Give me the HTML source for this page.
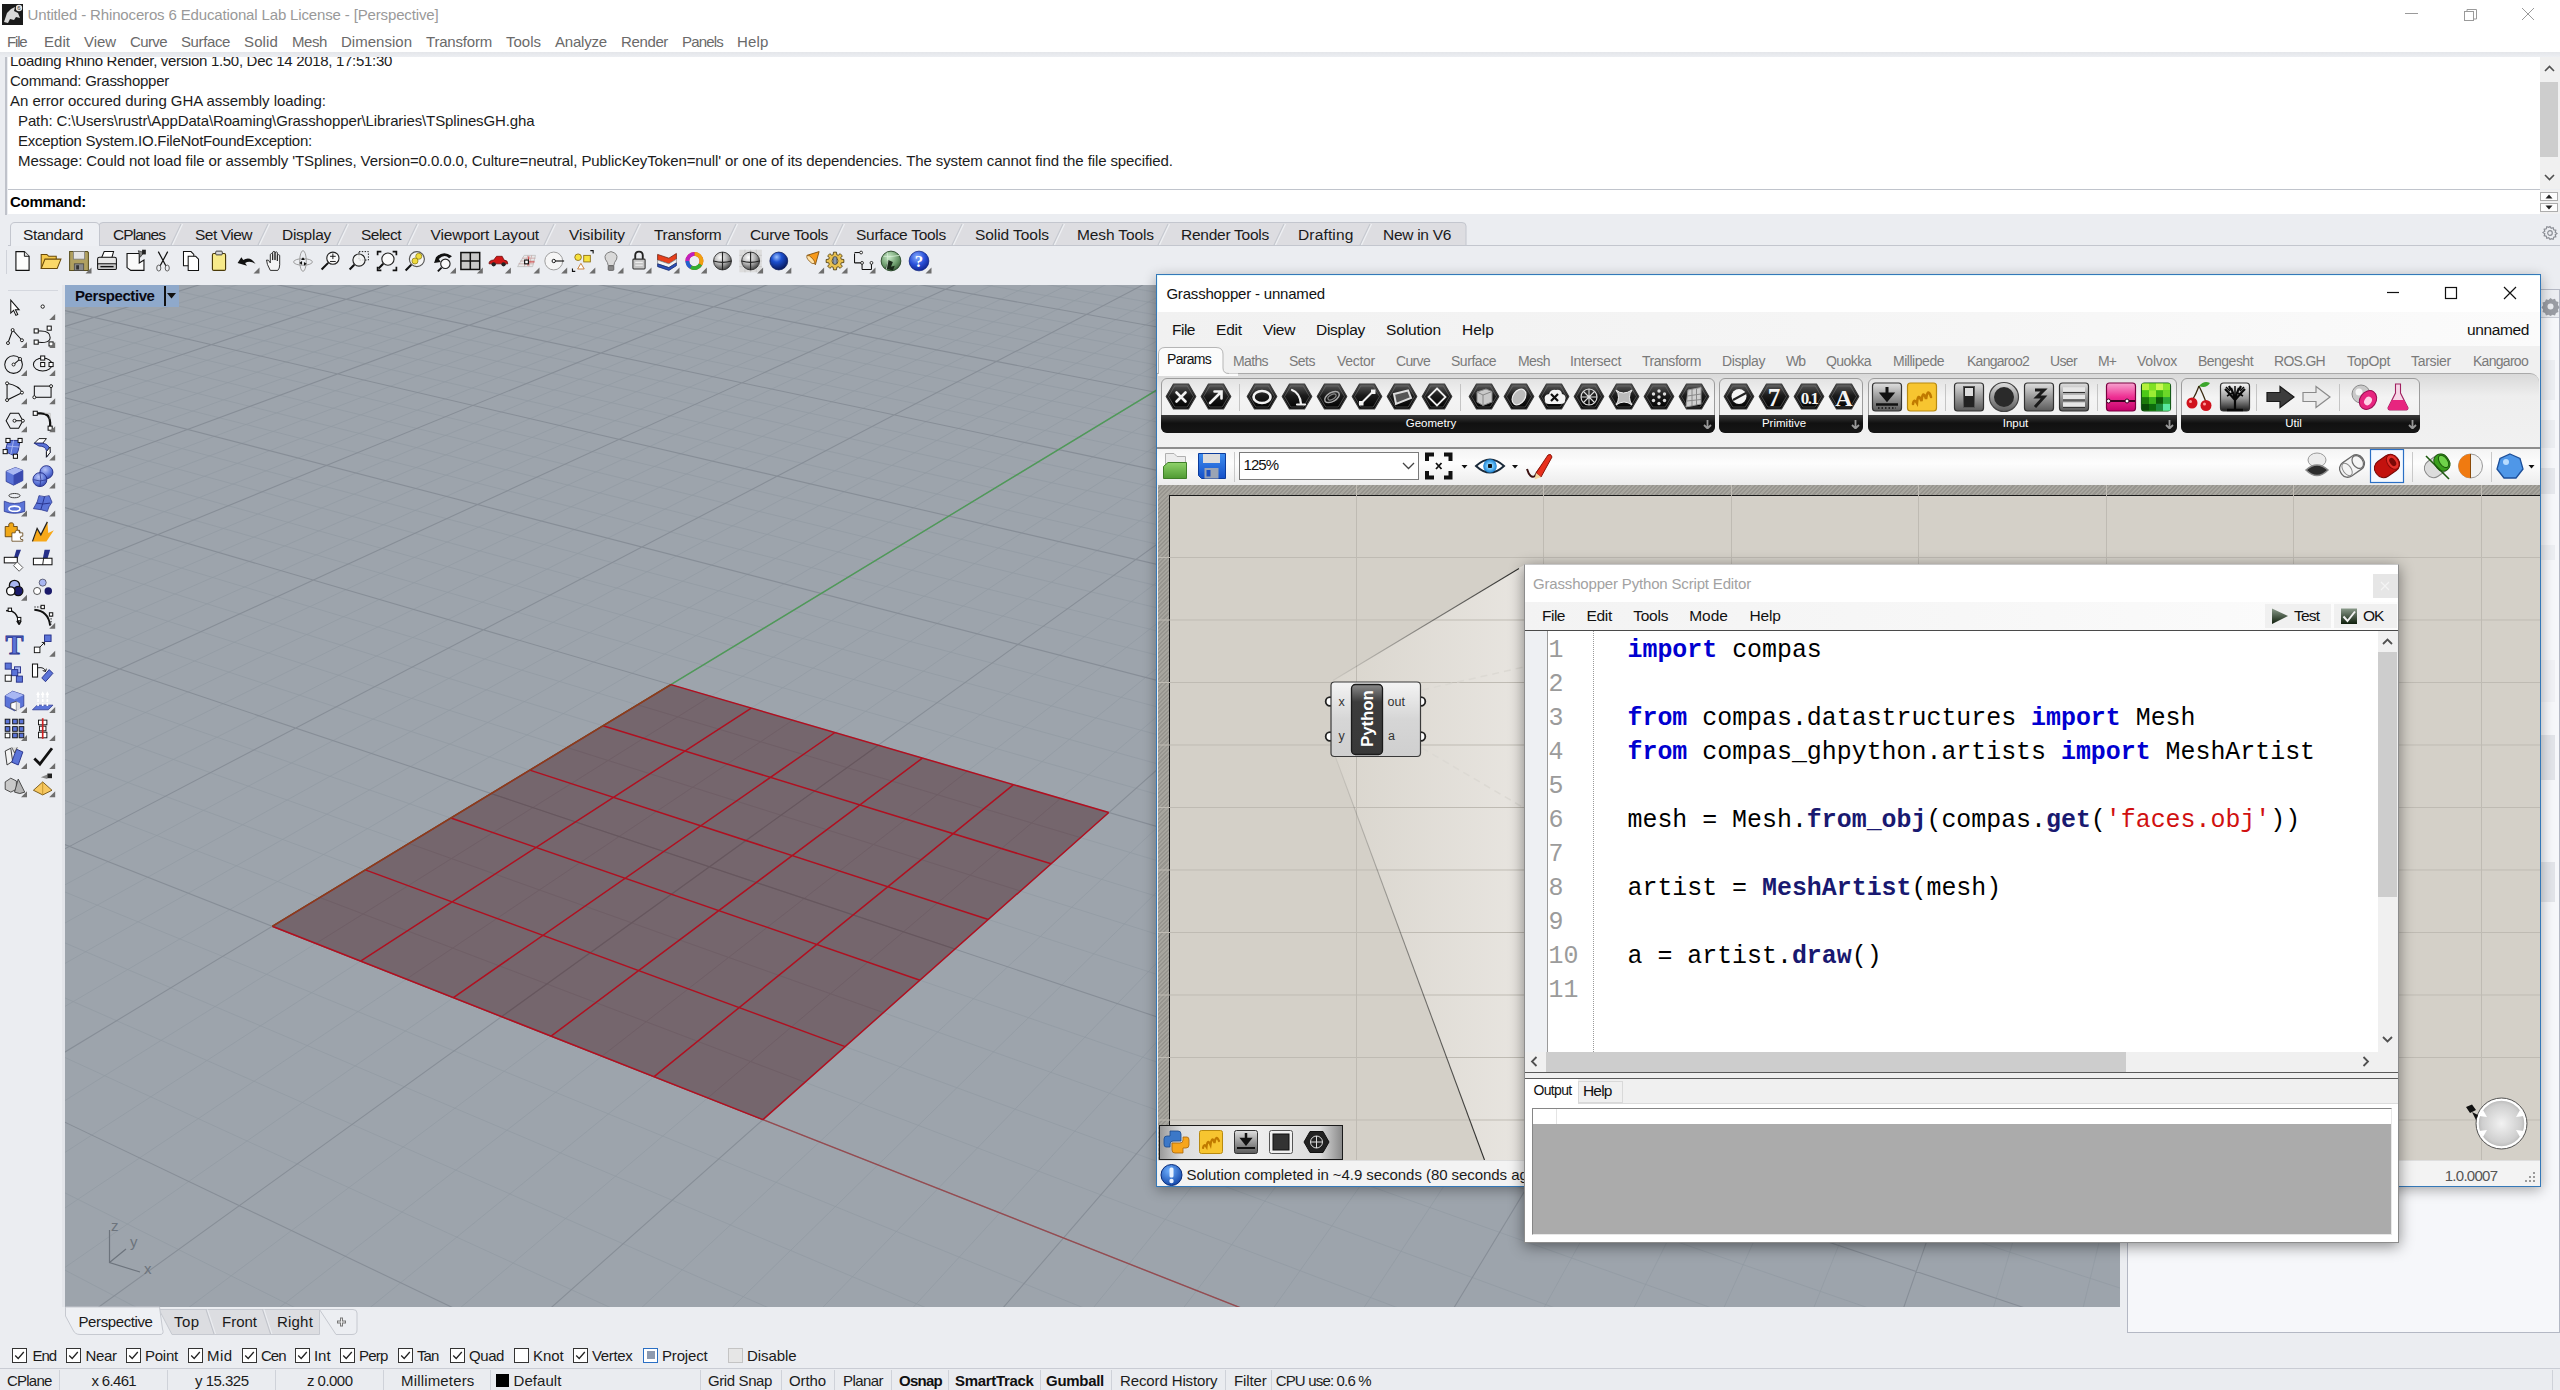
<!DOCTYPE html>
<html><head><meta charset="utf-8"><title>Rhino Grasshopper</title>
<style>
html,body{margin:0;padding:0}
body{width:2560px;height:1390px;overflow:hidden;position:relative;background:#ebedf1;font-family:"Liberation Sans",sans-serif}
.b{position:absolute;display:block}
.t{position:absolute;white-space:pre;font-family:"Liberation Sans",sans-serif}
.m{font-family:"Liberation Mono",monospace}
</style></head><body>
<div class="b" style="left:0.00px;top:0.00px;width:2560.00px;height:52.00px;background:#ffffff;"></div>
<svg class="b" style="left:2px;top:4px" width="21" height="21" viewBox="0 0 21 21"><rect width="21" height="21" fill="#1a1a1a"/><path d="M2 18 L5 9 L9 5 L13 3 L12 7 L16 9 L18 14 L14 13 L12 16 L8 15 L6 19Z" fill="#d8d8d8"/><circle cx="17" cy="4" r="3.2" fill="#e8e8e8"/><text x="15.2" y="6.4" font-size="6" font-family="Liberation Sans, sans-serif" fill="#333">6</text></svg>
<span class="t" style="left:27.50px;top:5.80px;font-size:15.00px;line-height:18.00px;color:#999999;letter-spacing:-0.147px;">Untitled - Rhinoceros 6 Educational Lab License - [Perspective]</span>
<svg class="b" style="left:2390px;top:0" width="170" height="30" viewBox="0 0 170 30" fill="none" stroke="#9a9a9a" stroke-width="1"><path d="M15 13.5H28"/><rect x="74.5" y="11.5" width="9" height="9"/><path d="M77 11.5V9.500H86.500V19H84"/><path d="M132 8L144 20M144 8L132 20"/></svg>
<span class="t" style="left:7.00px;top:32.80px;font-size:15.00px;line-height:18.00px;color:#6a6a6a;letter-spacing:-1.168px;">File</span>
<span class="t" style="left:44.00px;top:32.80px;font-size:15.00px;line-height:18.00px;color:#6a6a6a;letter-spacing:0.038px;">Edit</span>
<span class="t" style="left:84.00px;top:32.80px;font-size:15.00px;line-height:18.00px;color:#6a6a6a;letter-spacing:-0.061px;">View</span>
<span class="t" style="left:130.00px;top:32.80px;font-size:15.00px;line-height:18.00px;color:#6a6a6a;letter-spacing:-0.603px;">Curve</span>
<span class="t" style="left:181.00px;top:32.80px;font-size:15.00px;line-height:18.00px;color:#6a6a6a;letter-spacing:-0.386px;">Surface</span>
<span class="t" style="left:244.00px;top:32.80px;font-size:15.00px;line-height:18.00px;color:#6a6a6a;letter-spacing:0.129px;">Solid</span>
<span class="t" style="left:292.00px;top:32.80px;font-size:15.00px;line-height:18.00px;color:#6a6a6a;letter-spacing:-0.421px;">Mesh</span>
<span class="t" style="left:341.00px;top:32.80px;font-size:15.00px;line-height:18.00px;color:#6a6a6a;letter-spacing:0.015px;">Dimension</span>
<span class="t" style="left:426.00px;top:32.80px;font-size:15.00px;line-height:18.00px;color:#6a6a6a;letter-spacing:-0.200px;">Transform</span>
<span class="t" style="left:506.00px;top:32.80px;font-size:15.00px;line-height:18.00px;color:#6a6a6a;letter-spacing:-0.004px;">Tools</span>
<span class="t" style="left:555.00px;top:32.80px;font-size:15.00px;line-height:18.00px;color:#6a6a6a;letter-spacing:-0.195px;">Analyze</span>
<span class="t" style="left:621.00px;top:32.80px;font-size:15.00px;line-height:18.00px;color:#6a6a6a;letter-spacing:-0.367px;">Render</span>
<span class="t" style="left:682.00px;top:32.80px;font-size:15.00px;line-height:18.00px;color:#6a6a6a;letter-spacing:-0.811px;">Panels</span>
<span class="t" style="left:737.00px;top:32.80px;font-size:15.00px;line-height:18.00px;color:#6a6a6a;letter-spacing:0.162px;">Help</span>
<div class="b" style="left:0.00px;top:52.00px;width:2560.00px;height:5.00px;background:linear-gradient(#e4e6ea,#eceef2);"></div>
<div class="b" style="left:8.00px;top:57.00px;width:2532.00px;height:132.00px;background:#ffffff;"></div>
<div class="b" style="left:5.00px;top:57.00px;width:1.50px;height:158.00px;background:#bfc2ca;"></div>
<div class="b" style="left:8px;top:57px;width:2532px;height:132px;overflow:hidden">
<span class="t" style="left:2.00px;top:-5.20px;font-size:15.00px;line-height:18.00px;color:#1c1c1c;letter-spacing:-0.307px;">Loading Rhino Render, version 1.50, Dec 14 2018, 17:51:30</span>
<span class="t" style="left:2.00px;top:14.80px;font-size:15.00px;line-height:18.00px;color:#1c1c1c;letter-spacing:-0.263px;">Command: Grasshopper</span>
<span class="t" style="left:2.00px;top:34.80px;font-size:15.00px;line-height:18.00px;color:#1c1c1c;letter-spacing:-0.038px;">An error occured during GHA assembly loading:</span>
<span class="t" style="left:10.00px;top:54.80px;font-size:15.00px;line-height:18.00px;color:#1c1c1c;letter-spacing:-0.120px;">Path: C:\Users\rustr\AppData\Roaming\Grasshopper\Libraries\TSplinesGH.gha</span>
<span class="t" style="left:10.00px;top:74.80px;font-size:15.00px;line-height:18.00px;color:#1c1c1c;letter-spacing:-0.246px;">Exception System.IO.FileNotFoundException:</span>
<span class="t" style="left:10.00px;top:94.80px;font-size:15.00px;line-height:18.00px;color:#1c1c1c;letter-spacing:-0.104px;">Message: Could not load file or assembly 'TSplines, Version=0.0.0.0, Culture=neutral, PublicKeyToken=null' or one of its dependencies. The system cannot find the file specified.</span>
</div>
<div class="b" style="left:2540.00px;top:57.00px;width:20.00px;height:132.00px;background:#f0f0f0;"></div>
<div class="b" style="left:2540.00px;top:82.00px;width:18.00px;height:75.00px;background:#cdcdcd;"></div>
<svg class="b" style="left:2540px;top:57px" width="20" height="132" fill="none" stroke="#505050" stroke-width="1.6"><path d="M5 14L9.500 9.500L14 14"/><path d="M5 118L9.500 122.500L14 118"/></svg>
<div class="b" style="left:8.00px;top:189.00px;width:2532.00px;height:1.00px;background:#c0c4cc;"></div>
<div class="b" style="left:8.00px;top:190.00px;width:2532.00px;height:24.00px;background:#ffffff;"></div>
<span class="t" style="left:10.00px;top:193.10px;font-size:15.00px;line-height:18.00px;color:#000;font-weight:bold;letter-spacing:-0.292px;">Command:</span>
<div class="b" style="left:2540.00px;top:190.00px;width:20.00px;height:24.00px;background:#f0f0f0;"></div>
<svg class="b" style="left:2540px;top:190px" width="20" height="24"><rect x="0.500" y="2.500" width="17" height="8" fill="#fdfdfd" stroke="#adadad"/><rect x="0.500" y="13.500" width="17" height="8" fill="#fdfdfd" stroke="#adadad"/><path d="M5.500 8.500L9 4.500L12.500 8.500Z M5.500 15.500L9 19.500L12.500 15.500Z" fill="#222"/></svg>
<div class="b" style="left:8.00px;top:245.00px;width:2552.00px;height:1.00px;background:#c3c6ce;"></div>
<svg class="b" style="left:0;top:220px" width="1480" height="27" viewBox="0 220 1480 27"><path d="M99 245.500 L99 226 Q99 222.500 103 222.500 L1462 222.500 Q1466 222.500 1466 226 L1466 245.500Z" fill="#dddde1" stroke="#c3c6ce"/><path d="M171.0 245 L181.0 224" stroke="#c6c9d0" stroke-width="1.2" fill="none"/><path d="M172.5 245 L182.5 224" stroke="#eef0f3" stroke-width="1.2" fill="none"/><path d="M258.0 245 L268.0 224" stroke="#c6c9d0" stroke-width="1.2" fill="none"/><path d="M259.5 245 L269.5 224" stroke="#eef0f3" stroke-width="1.2" fill="none"/><path d="M337.0 245 L347.0 224" stroke="#c6c9d0" stroke-width="1.2" fill="none"/><path d="M338.5 245 L348.5 224" stroke="#eef0f3" stroke-width="1.2" fill="none"/><path d="M407.0 245 L417.0 224" stroke="#c6c9d0" stroke-width="1.2" fill="none"/><path d="M408.5 245 L418.5 224" stroke="#eef0f3" stroke-width="1.2" fill="none"/><path d="M544.0 245 L554.0 224" stroke="#c6c9d0" stroke-width="1.2" fill="none"/><path d="M545.5 245 L555.5 224" stroke="#eef0f3" stroke-width="1.2" fill="none"/><path d="M629.0 245 L639.0 224" stroke="#c6c9d0" stroke-width="1.2" fill="none"/><path d="M630.5 245 L640.5 224" stroke="#eef0f3" stroke-width="1.2" fill="none"/><path d="M726.0 245 L736.0 224" stroke="#c6c9d0" stroke-width="1.2" fill="none"/><path d="M727.5 245 L737.5 224" stroke="#eef0f3" stroke-width="1.2" fill="none"/><path d="M833.0 245 L843.0 224" stroke="#c6c9d0" stroke-width="1.2" fill="none"/><path d="M834.5 245 L844.5 224" stroke="#eef0f3" stroke-width="1.2" fill="none"/><path d="M952.0 245 L962.0 224" stroke="#c6c9d0" stroke-width="1.2" fill="none"/><path d="M953.5 245 L963.5 224" stroke="#eef0f3" stroke-width="1.2" fill="none"/><path d="M1053.0 245 L1063.0 224" stroke="#c6c9d0" stroke-width="1.2" fill="none"/><path d="M1054.5 245 L1064.5 224" stroke="#eef0f3" stroke-width="1.2" fill="none"/><path d="M1158.0 245 L1168.0 224" stroke="#c6c9d0" stroke-width="1.2" fill="none"/><path d="M1159.5 245 L1169.5 224" stroke="#eef0f3" stroke-width="1.2" fill="none"/><path d="M1274.0 245 L1284.0 224" stroke="#c6c9d0" stroke-width="1.2" fill="none"/><path d="M1275.5 245 L1285.5 224" stroke="#eef0f3" stroke-width="1.2" fill="none"/><path d="M1360.0 245 L1370.0 224" stroke="#c6c9d0" stroke-width="1.2" fill="none"/><path d="M1361.5 245 L1371.5 224" stroke="#eef0f3" stroke-width="1.2" fill="none"/><path d="M10.500 246 L10.500 227 Q10.500 222.500 15 222.500 L95 222.500 Q99.500 222.500 99.500 227 L99.500 246" fill="#edeff3" stroke="#c3c6ce"/></svg>
<span class="t" style="left:23.00px;top:226.13px;font-size:15.50px;line-height:18.60px;color:#1a1a1a;letter-spacing:-0.364px;">Standard</span>
<span class="t" style="left:113.00px;top:226.13px;font-size:15.50px;line-height:18.60px;color:#1a1a1a;letter-spacing:-0.942px;">CPlanes</span>
<span class="t" style="left:195.00px;top:226.13px;font-size:15.50px;line-height:18.60px;color:#1a1a1a;letter-spacing:-0.486px;">Set View</span>
<span class="t" style="left:282.00px;top:226.13px;font-size:15.50px;line-height:18.60px;color:#1a1a1a;letter-spacing:-0.261px;">Display</span>
<span class="t" style="left:361.00px;top:226.13px;font-size:15.50px;line-height:18.60px;color:#1a1a1a;letter-spacing:-0.514px;">Select</span>
<span class="t" style="left:430.50px;top:226.13px;font-size:15.50px;line-height:18.60px;color:#1a1a1a;letter-spacing:-0.158px;">Viewport Layout</span>
<span class="t" style="left:569.00px;top:226.13px;font-size:15.50px;line-height:18.60px;color:#1a1a1a;letter-spacing:0.029px;">Visibility</span>
<span class="t" style="left:654.00px;top:226.13px;font-size:15.50px;line-height:18.60px;color:#1a1a1a;letter-spacing:-0.283px;">Transform</span>
<span class="t" style="left:750.00px;top:226.13px;font-size:15.50px;line-height:18.60px;color:#1a1a1a;letter-spacing:-0.324px;">Curve Tools</span>
<span class="t" style="left:856.00px;top:226.13px;font-size:15.50px;line-height:18.60px;color:#1a1a1a;letter-spacing:-0.279px;">Surface Tools</span>
<span class="t" style="left:975.00px;top:226.13px;font-size:15.50px;line-height:18.60px;color:#1a1a1a;letter-spacing:-0.062px;">Solid Tools</span>
<span class="t" style="left:1077.00px;top:226.13px;font-size:15.50px;line-height:18.60px;color:#1a1a1a;letter-spacing:-0.111px;">Mesh Tools</span>
<span class="t" style="left:1181.00px;top:226.13px;font-size:15.50px;line-height:18.60px;color:#1a1a1a;letter-spacing:-0.254px;">Render Tools</span>
<span class="t" style="left:1298.00px;top:226.13px;font-size:15.50px;line-height:18.60px;color:#1a1a1a;letter-spacing:0.153px;">Drafting</span>
<span class="t" style="left:1383.00px;top:226.13px;font-size:15.50px;line-height:18.60px;color:#1a1a1a;letter-spacing:-0.294px;">New in V6</span>
<svg class="b" style="left:2542px;top:225px" width="16" height="16" viewBox="0 0 16 16" fill="none" stroke="#8a8d94" stroke-width="1.200"><circle cx="8" cy="8" r="2.300"/><path d="M8 1.500l1.200 1.800 2-.6.500 2.100 2.100.5-.6 2 1.800 1.200-1.800 1.200.6 2-2.100.5-.5 2.100-2-.6L8 14.500l-1.200-1.800-2 .6-.5-2.100-2.100-.5.6-2L1 7.500l1.800-1.200-.6-2 2.100-.5.5-2.100 2 .6z"/></svg>
<svg class="b" style="left:65px;top:285px" width="2055" height="1022" viewBox="65 285 2055 1022">
<rect x="65" y="285" width="2055" height="1022" fill="#9da4ac"/>
<path d="M63.0 291.4L91.4 283.0M63.0 302.9L129.4 283.0M63.0 314.7L167.3 283.0M63.0 339.6L243.1 283.0M63.0 352.7L281.0 283.0M63.0 366.2L318.8 283.0M63.0 380.2L356.7 283.0M63.0 409.7L432.3 283.0M63.0 425.2L470.0 283.0M63.0 441.3L507.8 283.0M63.0 458.1L545.5 283.0M63.0 493.5L620.9 283.0M63.0 512.3L658.6 283.0M63.0 531.9L696.2 283.0M63.0 552.3L733.9 283.0M63.0 595.7L809.1 283.0M63.0 618.9L846.6 283.0M63.0 643.1L884.2 283.0M63.0 668.5L921.7 283.0M63.0 723.0L996.7 283.0M63.0 752.3L1034.2 283.0M63.0 783.1L1071.6 283.0M63.0 1269.1L139.4 1309.0M63.0 815.6L1109.0 283.0M63.0 1191.9L297.6 1309.0M63.0 885.9L1183.8 283.0M63.0 1056.6L613.5 1309.0M63.0 924.1L1221.2 283.0M63.0 997.1L771.2 1309.0M63.0 964.6L1258.6 283.0M63.0 942.1L928.8 1309.0M63.0 1007.6L1295.9 283.0M63.0 891.2L1086.3 1309.0M63.0 1101.8L1370.5 283.0M63.0 799.8L1400.8 1309.0M63.0 1153.7L1407.8 283.0M63.0 758.6L1557.8 1309.0M63.0 1209.3L1445.0 283.0M63.0 720.1L1714.6 1309.0M63.0 1268.8L1482.2 283.0M63.0 684.0L1871.4 1309.0M186.8 1309.0L1556.6 283.0M63.0 618.1L2122.0 1288.7M277.6 1309.0L1593.8 283.0M63.0 588.0L2122.0 1239.8M368.3 1309.0L1631.0 283.0M63.0 559.5L2122.0 1193.6M458.9 1309.0L1668.1 283.0M63.0 532.6L2122.0 1149.9M640.1 1309.0L1742.3 283.0M63.0 482.8L2122.0 1069.1M730.7 1309.0L1779.4 283.0M63.0 459.8L2122.0 1031.8M821.2 1309.0L1816.4 283.0M63.0 437.9L2122.0 996.2M911.6 1309.0L1853.4 283.0M63.0 417.1L2122.0 962.4M1092.3 1309.0L1927.5 283.0M63.0 378.2L2122.0 899.3M1182.6 1309.0L1964.4 283.0M63.0 360.1L2122.0 869.8M1272.8 1309.0L2001.4 283.0M63.0 342.7L2122.0 841.7M1363.0 1309.0L2038.3 283.0M63.0 326.1L2122.0 814.7M1543.3 1309.0L2112.1 283.0M63.0 294.9L2122.0 764.0M1633.3 1309.0L2122.0 336.7M75.6 283.0L2122.0 740.2M1723.3 1309.0L2122.0 424.6M140.2 283.0L2122.0 717.3M1813.3 1309.0L2122.0 535.3M204.7 283.0L2122.0 695.3M1993.0 1309.0L2122.0 872.7M333.6 283.0L2122.0 653.7M2082.8 1309.0L2122.0 1148.4M397.9 283.0L2122.0 634.1M462.2 283.0L2122.0 615.1M526.4 283.0L2122.0 596.8M654.7 283.0L2122.0 562.1M718.8 283.0L2122.0 545.6M782.8 283.0L2122.0 529.6M846.7 283.0L2122.0 514.2M974.4 283.0L2122.0 484.7M1038.2 283.0L2122.0 470.7M1101.9 283.0L2122.0 457.0M1165.6 283.0L2122.0 443.8M1292.7 283.0L2122.0 418.5M1356.2 283.0L2122.0 406.4M1419.6 283.0L2122.0 394.7M1483.0 283.0L2122.0 383.2M1609.5 283.0L2122.0 361.3M1672.7 283.0L2122.0 350.8M1735.9 283.0L2122.0 340.5M1798.9 283.0L2122.0 330.5M1924.9 283.0L2122.0 311.3M1987.8 283.0L2122.0 302.0M2050.7 283.0L2122.0 293.0M2113.5 283.0L2122.0 284.2" stroke="#929aa2" stroke-width="1" fill="none" opacity="0.7"/>
<path d="M63.0 327.0L205.2 283.0M63.0 394.7L394.5 283.0M63.0 475.5L583.2 283.0M63.0 573.5L771.5 283.0M63.0 695.1L959.2 283.0M63.0 849.8L1146.5 283.0M63.0 1121.3L455.6 1309.0M63.0 1053.2L1333.2 283.0M63.0 843.8L1243.6 1309.0M96.0 1309.0L1519.4 283.0M63.0 650.0L2028.0 1309.0M549.6 1309.0L1705.2 283.0M63.0 507.0L2122.0 1108.4M1002.0 1309.0L1890.5 283.0M63.0 397.2L2122.0 930.1M1453.2 1309.0L2075.2 283.0M63.0 310.1L2122.0 788.8M1903.2 1309.0L2122.0 678.9M269.2 283.0L2122.0 674.1M590.6 283.0L2122.0 579.1M910.6 283.0L2122.0 499.2M1229.2 283.0L2122.0 431.0M1546.3 283.0L2122.0 372.1M1862.0 283.0L2122.0 320.8" stroke="#878e97" stroke-width="1.1" fill="none"/>
<path d="M272.3 926.3L1243.6 1309.0" stroke="#964b50" stroke-width="1.4"/>
<path d="M272.3 926.3L1333.2 283.0" stroke="#4f9a58" stroke-width="1.4"/>
<polygon points="272.3,926.3 762.9,1119.6 1108.8,812.5 670.9,684.6" fill="#74636a" fill-opacity="0.96"/>
<path d="M315.9 943.5L710.7 696.2M319.8 897.5L805.0 1082.2M406.4 979.1L792.7 720.2M408.9 843.4L883.4 1012.6M501.6 1016.6L878.2 745.2M491.1 793.6L954.9 949.1M601.9 1056.2L967.5 771.2M567.1 747.5L1020.4 891.0M707.8 1097.9L1060.6 798.4M637.6 704.8L1080.5 837.6" stroke="#6f5f66" stroke-width="1" fill="none"/>
<path d="M501.6 1016.6L878.2 745.2M491.1 793.6L954.9 949.1" stroke="#66575e" stroke-width="1.1" fill="none"/>
<path d="M272.3 926.3L670.9 684.6M272.3 926.3L762.9 1119.6M360.6 961.1L751.3 708.1M365.3 869.9L845.1 1046.6M453.4 997.6L835.0 732.5M450.9 818.0L920.0 980.2M551.1 1036.1L922.4 758.1M529.8 770.1L988.3 919.5M654.1 1076.7L1013.5 784.7M603.0 725.8L1051.1 863.8M762.9 1119.6L1108.8 812.5M670.9 684.6L1108.8 812.5" stroke="#b01020" stroke-width="1.5" fill="none"/>
<path d="M272.3 926.3L670.9 684.6" stroke="#84441c" stroke-width="1.25" fill="none"/>
<g stroke="#6d747d" stroke-width="1.2" fill="none"><path d="M109.500 1230V1262.500L140 1272M109.500 1262.500L126 1249"/></g>
<g font-family="Liberation Sans, sans-serif" font-size="15" fill="#6d747d"><text x="111" y="1231">z</text><text x="130" y="1247">y</text><text x="144" y="1274">x</text></g>
</svg>
<div class="b" style="left:65.00px;top:285.00px;width:114.00px;height:22.00px;background:#8fa9cb;"></div>
<span class="t" style="left:75.00px;top:286.80px;font-size:15.00px;line-height:18.00px;color:#0a0a14;font-weight:bold;letter-spacing:-0.430px;">Perspective</span>
<div class="b" style="left:164.00px;top:286.00px;width:1.50px;height:20.00px;background:#111;"></div>
<svg class="b" style="left:166px;top:292px" width="12" height="8"><path d="M1 1H10L5.500 6.500Z" fill="#111"/></svg>
<svg class="b" style="left:60px;top:1306px" width="320" height="32" viewBox="60 1306 320 32"><path d="M159 1309.500H319.500V1334.500H172Z" fill="#dcdde1" stroke="#c6c9d0"/><path d="M319.500 1309.500H353Q357 1309.500 357 1313V1330Q357 1334.500 352 1334.500H336Z" fill="#eceef2" stroke="#c6c9d0"/><path d="M206 1309.500L214 1334M262.500 1309.500L270.500 1334" stroke="#c0c3ca" fill="none"/><path d="M207.500 1309.500L215.500 1334M264 1309.500L272 1334" stroke="#eceef2" fill="none"/><path d="M65.500 1307V1316L73 1330Q75 1334.500 80 1334.500H160Q164.500 1334.500 162.500 1329L159.500 1307Z" fill="#eef0f4" stroke="#c6c9d0"/><path d="M337 1322H346M341.500 1317.500V1326.500" stroke="#777" stroke-width="3" fill="none"/><path d="M338 1322H345M341.500 1318.500V1325.500" stroke="#eee" stroke-width="1" fill="none"/></svg>
<span class="t" style="left:78.50px;top:1313.30px;font-size:15.00px;line-height:18.00px;color:#1a1a1a;letter-spacing:-0.398px;">Perspective</span>
<span class="t" style="left:174.00px;top:1313.30px;font-size:15.00px;line-height:18.00px;color:#1a1a1a;letter-spacing:0.438px;">Top</span>
<span class="t" style="left:222.00px;top:1313.30px;font-size:15.00px;line-height:18.00px;color:#1a1a1a;letter-spacing:-0.003px;">Front</span>
<span class="t" style="left:277.00px;top:1313.30px;font-size:15.00px;line-height:18.00px;color:#1a1a1a;letter-spacing:0.196px;">Right</span>
<div class="b" style="left:12.00px;top:1347.50px;width:15.00px;height:15.00px;background:#fff;border:1px solid #333;box-sizing:border-box;"></div>
<svg class="b" style="left:12.0px;top:1348px" width="15" height="15"><path d="M3.200 7.500L6.200 10.500L11.800 4" stroke="#222" stroke-width="1.300" fill="none"/></svg>
<span class="t" style="left:32.50px;top:1346.80px;font-size:15.00px;line-height:18.00px;color:#1a1a1a;letter-spacing:-1.064px;">End</span>
<div class="b" style="left:66.00px;top:1347.50px;width:15.00px;height:15.00px;background:#fff;border:1px solid #333;box-sizing:border-box;"></div>
<svg class="b" style="left:66.0px;top:1348px" width="15" height="15"><path d="M3.200 7.500L6.200 10.500L11.800 4" stroke="#222" stroke-width="1.300" fill="none"/></svg>
<span class="t" style="left:85.50px;top:1346.80px;font-size:15.00px;line-height:18.00px;color:#1a1a1a;letter-spacing:-0.379px;">Near</span>
<div class="b" style="left:125.50px;top:1347.50px;width:15.00px;height:15.00px;background:#fff;border:1px solid #333;box-sizing:border-box;"></div>
<svg class="b" style="left:125.5px;top:1348px" width="15" height="15"><path d="M3.200 7.500L6.200 10.500L11.800 4" stroke="#222" stroke-width="1.300" fill="none"/></svg>
<span class="t" style="left:145.00px;top:1346.80px;font-size:15.00px;line-height:18.00px;color:#1a1a1a;letter-spacing:-0.238px;">Point</span>
<div class="b" style="left:187.50px;top:1347.50px;width:15.00px;height:15.00px;background:#fff;border:1px solid #333;box-sizing:border-box;"></div>
<svg class="b" style="left:187.5px;top:1348px" width="15" height="15"><path d="M3.200 7.500L6.200 10.500L11.800 4" stroke="#222" stroke-width="1.300" fill="none"/></svg>
<span class="t" style="left:207.00px;top:1346.80px;font-size:15.00px;line-height:18.00px;color:#1a1a1a;letter-spacing:0.443px;">Mid</span>
<div class="b" style="left:241.50px;top:1347.50px;width:15.00px;height:15.00px;background:#fff;border:1px solid #333;box-sizing:border-box;"></div>
<svg class="b" style="left:241.5px;top:1348px" width="15" height="15"><path d="M3.200 7.500L6.200 10.500L11.800 4" stroke="#222" stroke-width="1.300" fill="none"/></svg>
<span class="t" style="left:261.00px;top:1346.80px;font-size:15.00px;line-height:18.00px;color:#1a1a1a;letter-spacing:-1.007px;">Cen</span>
<div class="b" style="left:294.50px;top:1347.50px;width:15.00px;height:15.00px;background:#fff;border:1px solid #333;box-sizing:border-box;"></div>
<svg class="b" style="left:294.5px;top:1348px" width="15" height="15"><path d="M3.200 7.500L6.200 10.500L11.800 4" stroke="#222" stroke-width="1.300" fill="none"/></svg>
<span class="t" style="left:314.00px;top:1346.80px;font-size:15.00px;line-height:18.00px;color:#1a1a1a;letter-spacing:-0.060px;">Int</span>
<div class="b" style="left:339.50px;top:1347.50px;width:15.00px;height:15.00px;background:#fff;border:1px solid #333;box-sizing:border-box;"></div>
<svg class="b" style="left:339.5px;top:1348px" width="15" height="15"><path d="M3.200 7.500L6.200 10.500L11.800 4" stroke="#222" stroke-width="1.300" fill="none"/></svg>
<span class="t" style="left:359.00px;top:1346.80px;font-size:15.00px;line-height:18.00px;color:#1a1a1a;letter-spacing:-0.797px;">Perp</span>
<div class="b" style="left:397.50px;top:1347.50px;width:15.00px;height:15.00px;background:#fff;border:1px solid #333;box-sizing:border-box;"></div>
<svg class="b" style="left:397.5px;top:1348px" width="15" height="15"><path d="M3.200 7.500L6.200 10.500L11.800 4" stroke="#222" stroke-width="1.300" fill="none"/></svg>
<span class="t" style="left:417.00px;top:1346.80px;font-size:15.00px;line-height:18.00px;color:#1a1a1a;letter-spacing:-0.896px;">Tan</span>
<div class="b" style="left:449.50px;top:1347.50px;width:15.00px;height:15.00px;background:#fff;border:1px solid #333;box-sizing:border-box;"></div>
<svg class="b" style="left:449.5px;top:1348px" width="15" height="15"><path d="M3.200 7.500L6.200 10.500L11.800 4" stroke="#222" stroke-width="1.300" fill="none"/></svg>
<span class="t" style="left:469.00px;top:1346.80px;font-size:15.00px;line-height:18.00px;color:#1a1a1a;letter-spacing:-0.425px;">Quad</span>
<div class="b" style="left:513.50px;top:1347.50px;width:15.00px;height:15.00px;background:#fff;border:1px solid #333;box-sizing:border-box;"></div>
<span class="t" style="left:533.00px;top:1346.80px;font-size:15.00px;line-height:18.00px;color:#1a1a1a;letter-spacing:-0.090px;">Knot</span>
<div class="b" style="left:572.50px;top:1347.50px;width:15.00px;height:15.00px;background:#fff;border:1px solid #333;box-sizing:border-box;"></div>
<svg class="b" style="left:572.5px;top:1348px" width="15" height="15"><path d="M3.200 7.500L6.200 10.500L11.800 4" stroke="#222" stroke-width="1.300" fill="none"/></svg>
<span class="t" style="left:592.00px;top:1346.80px;font-size:15.00px;line-height:18.00px;color:#1a1a1a;letter-spacing:-0.338px;">Vertex</span>
<div class="b" style="left:643.00px;top:1347.50px;width:15.00px;height:15.00px;background:#fff;border:1px solid #2a6fc4;box-sizing:border-box;"></div>
<div class="b" style="left:646.50px;top:1351.00px;width:8.00px;height:8.00px;background:#8e9aae;"></div>
<span class="t" style="left:662.00px;top:1346.80px;font-size:15.00px;line-height:18.00px;color:#1a1a1a;letter-spacing:-0.170px;">Project</span>
<div class="b" style="left:728.00px;top:1347.50px;width:15.00px;height:15.00px;background:#e6e6e6;border:1px solid #c4c4c4;box-sizing:border-box;"></div>
<span class="t" style="left:747.00px;top:1346.80px;font-size:15.00px;line-height:18.00px;color:#1a1a1a;letter-spacing:-0.075px;">Disable</span>
<div class="b" style="left:0.00px;top:1368.00px;width:2560.00px;height:1.00px;background:#c9ccd4;"></div>
<div class="b" style="left:0.00px;top:1369.00px;width:2560.00px;height:21.00px;background:#eaecf0;"></div>
<div class="b" style="left:59.00px;top:1370.00px;width:1.00px;height:20.00px;background:#cfd2d9;"></div>
<div class="b" style="left:167.00px;top:1370.00px;width:1.00px;height:20.00px;background:#cfd2d9;"></div>
<div class="b" style="left:275.00px;top:1370.00px;width:1.00px;height:20.00px;background:#cfd2d9;"></div>
<div class="b" style="left:383.00px;top:1370.00px;width:1.00px;height:20.00px;background:#cfd2d9;"></div>
<div class="b" style="left:490.00px;top:1370.00px;width:1.00px;height:20.00px;background:#cfd2d9;"></div>
<div class="b" style="left:700.00px;top:1370.00px;width:1.00px;height:20.00px;background:#cfd2d9;"></div>
<div class="b" style="left:781.00px;top:1370.00px;width:1.00px;height:20.00px;background:#cfd2d9;"></div>
<div class="b" style="left:834.00px;top:1370.00px;width:1.00px;height:20.00px;background:#cfd2d9;"></div>
<div class="b" style="left:891.00px;top:1370.00px;width:1.00px;height:20.00px;background:#cfd2d9;"></div>
<div class="b" style="left:948.00px;top:1370.00px;width:1.00px;height:20.00px;background:#cfd2d9;"></div>
<div class="b" style="left:1040.00px;top:1370.00px;width:1.00px;height:20.00px;background:#cfd2d9;"></div>
<div class="b" style="left:1111.00px;top:1370.00px;width:1.00px;height:20.00px;background:#cfd2d9;"></div>
<div class="b" style="left:1225.00px;top:1370.00px;width:1.00px;height:20.00px;background:#cfd2d9;"></div>
<div class="b" style="left:1271.00px;top:1370.00px;width:1.00px;height:20.00px;background:#cfd2d9;"></div>
<div class="b" style="left:2552.00px;top:1370.00px;width:1.00px;height:20.00px;background:#cfd2d9;"></div>
<span class="t" style="left:7.00px;top:1372.10px;font-size:15.00px;line-height:18.00px;color:#1c1c1c;letter-spacing:-0.783px;">CPlane</span>
<span class="t" style="left:91.50px;top:1372.10px;font-size:15.00px;line-height:18.00px;color:#1c1c1c;letter-spacing:-0.673px;">x 6.461</span>
<span class="t" style="left:195.00px;top:1372.10px;font-size:15.00px;line-height:18.00px;color:#1c1c1c;letter-spacing:-0.507px;">y 15.325</span>
<span class="t" style="left:307.00px;top:1372.10px;font-size:15.00px;line-height:18.00px;color:#1c1c1c;letter-spacing:-0.530px;">z 0.000</span>
<span class="t" style="left:401.00px;top:1372.10px;font-size:15.00px;line-height:18.00px;color:#1c1c1c;letter-spacing:0.166px;">Millimeters</span>
<span class="t" style="left:513.50px;top:1372.10px;font-size:15.00px;line-height:18.00px;color:#1c1c1c;letter-spacing:0.067px;">Default</span>
<span class="t" style="left:708.00px;top:1372.10px;font-size:15.00px;line-height:18.00px;color:#1c1c1c;letter-spacing:-0.394px;">Grid Snap</span>
<span class="t" style="left:789.00px;top:1372.10px;font-size:15.00px;line-height:18.00px;color:#1c1c1c;letter-spacing:-0.104px;">Ortho</span>
<span class="t" style="left:843.00px;top:1372.10px;font-size:15.00px;line-height:18.00px;color:#1c1c1c;letter-spacing:-0.561px;">Planar</span>
<span class="t" style="left:899.00px;top:1372.10px;font-size:15.00px;line-height:18.00px;color:#111;font-weight:bold;letter-spacing:-0.737px;">Osnap</span>
<span class="t" style="left:955.00px;top:1372.10px;font-size:15.00px;line-height:18.00px;color:#111;font-weight:bold;letter-spacing:-0.322px;">SmartTrack</span>
<span class="t" style="left:1046.00px;top:1372.10px;font-size:15.00px;line-height:18.00px;color:#111;font-weight:bold;letter-spacing:-0.287px;">Gumball</span>
<span class="t" style="left:1120.00px;top:1372.10px;font-size:15.00px;line-height:18.00px;color:#1c1c1c;letter-spacing:-0.121px;">Record History</span>
<span class="t" style="left:1234.00px;top:1372.10px;font-size:15.00px;line-height:18.00px;color:#1c1c1c;letter-spacing:-0.139px;">Filter</span>
<span class="t" style="left:1275.70px;top:1372.10px;font-size:15.00px;line-height:18.00px;color:#1c1c1c;letter-spacing:-0.830px;">CPU use: 0.6 %</span>
<div class="b" style="left:496.00px;top:1374.00px;width:13.00px;height:13.00px;background:#000;"></div>
<div class="b" style="left:2127.00px;top:289.00px;width:433.00px;height:1044.00px;background:#f6f7fa;border:1px solid #b4b8c4;box-sizing:border-box;"></div>
<div class="b" style="left:2128.00px;top:290.00px;width:431.00px;height:27.00px;background:#ebedf1;border-bottom:1px solid #c9ccd4;"></div>
<svg class="b" style="left:2541px;top:297px" width="19" height="19" viewBox="-9.500 -9.500 19 19"><path d="M0 -8.500l2 1.600 2.500-.800 1 2.400 2.500.900-.600 2.600L9 1l-1.600 2 .500 2.600-2.400 1-1 2.400-2.500-.700L0 9.500l-2-1.200-2.500.700-1-2.400-2.400-1 .500-2.600L-9 1l1.600-2.300-.600-2.600 2.500-.900 1-2.400 2.500.800z" fill="#9a9da4"/><circle r="3" fill="#ebedf1"/></svg>
<div class="b" style="left:2541.00px;top:360.00px;width:14.00px;height:40.00px;background:#eceef2;"></div>
<div class="b" style="left:2541.00px;top:420.00px;width:14.00px;height:28.00px;background:#eceef2;"></div>
<div class="b" style="left:2541.00px;top:468.00px;width:14.00px;height:26.00px;background:#e6e8ed;"></div>
<div class="b" style="left:2541.00px;top:545.00px;width:14.00px;height:15.00px;background:#eceef2;"></div>
<div class="b" style="left:2541.00px;top:660.00px;width:14.00px;height:42.00px;background:#f0f1f5;"></div>
<div class="b" style="left:2541.00px;top:735.00px;width:14.00px;height:45.00px;background:#e2e4e9;"></div>
<div class="b" style="left:2541.00px;top:862.00px;width:14.00px;height:40.00px;background:#e2e4e9;"></div>
<svg class="b" style="left:0;top:246px" width="960" height="560" viewBox="0 246 960 560">
<defs><radialGradient id="sph" cx=".38" cy=".3" r=".75"><stop offset="0" stop-color="#fff"/><stop offset=".5" stop-color="#b4b4b4"/><stop offset="1" stop-color="#3a3a3a"/></radialGradient><radialGradient id="bsp" cx=".38" cy=".28" r=".8"><stop offset="0" stop-color="#9ac0ff"/><stop offset=".35" stop-color="#1c50d0"/><stop offset="1" stop-color="#04104a"/></radialGradient><radialGradient id="gsp" cx=".4" cy=".3" r=".8"><stop offset="0" stop-color="#c8eac8"/><stop offset=".6" stop-color="#6a9a6a"/><stop offset="1" stop-color="#2a4a2a"/></radialGradient><radialGradient id="hsp" cx=".4" cy=".3" r=".8"><stop offset="0" stop-color="#8ab0ff"/><stop offset=".5" stop-color="#2a50d8"/><stop offset="1" stop-color="#0a1a80"/></radialGradient><radialGradient id="bl2" cx=".4" cy=".3" r=".8"><stop offset="0" stop-color="#b8c4f8"/><stop offset=".6" stop-color="#5b74d8"/><stop offset="1" stop-color="#2c3a9a"/></radialGradient></defs>
<g transform="translate(22.5 261)"><g transform="scale(.94)"><path d="M-7 -10H2L7 -5V10H-7Z" fill="#fdfdfd" stroke="#111" stroke-width="1.200"/><path d="M2 -10V-5H7" fill="#ddd" stroke="#111" stroke-width="1"/></g></g>
<g transform="translate(50.6 261)"><g transform="scale(.94)"><path d="M-10 8V-7H-4L-2 -5H6V-2" fill="#f4c84a" stroke="#6a4a08" stroke-width="1.100"/><path d="M-10 8L-6 -2H11L7 8Z" fill="#fbd868" stroke="#6a4a08" stroke-width="1.100"/></g></g>
<g transform="translate(79.0 261)"><g transform="scale(.94)"><path d="M-10 -10H9L10 -9V10H-10Z" fill="#b0a060" stroke="#5a5020" stroke-width="1.100"/><rect x="-6" y="-10" width="12" height="8" fill="#e4e4e4" stroke="#777" stroke-width=".8"/><rect x="-5" y="3" width="10" height="7" fill="#8a8a8a" stroke="#444" stroke-width=".8"/><rect x="-3" y="4.500" width="3" height="4.500" fill="#333"/></g><path d="M6.500 12.500H12.500V6.500Z" fill="#6e6e6e"/></g>
<g transform="translate(107.0 261)"><g transform="scale(.94)"><path d="M-6 -3L-3 -10H7L5 -3Z" fill="#fff" stroke="#111" stroke-width="1.100"/><path d="M-10 -2Q-10 -4 -8 -4H8Q10 -4 10 -2V4H-10Z" fill="#e6e6e6" stroke="#111" stroke-width="1.100"/><rect x="-10" y="3" width="20" height="6" rx="1" fill="#c9c9c9" stroke="#111" stroke-width="1.100"/><path d="M-7 6H7" stroke="#111" stroke-width="1.500"/></g></g>
<g transform="translate(135.5 261)"><g transform="scale(.94)"><path d="M-9 -8H4V2L9 -1V10H-5L-9 7Z" fill="#fafafa" stroke="#111" stroke-width="1.200"/><path d="M3 -11L9 -9L5 -4Z" fill="#888" stroke="#333" stroke-width=".8"/><rect x="7" y="-12" width="4" height="5" fill="#222"/></g></g>
<g transform="translate(163.0 261)"><g transform="scale(.94)"><path d="M-5 -10L3 5M5 -10L-3 5" stroke="#111" stroke-width="1.300"/><ellipse cx="-4.500" cy="7.500" rx="2.200" ry="3.200" fill="none" stroke="#555" stroke-width="1"/><ellipse cx="4.500" cy="7.500" rx="2.200" ry="3.200" fill="none" stroke="#555" stroke-width="1"/></g></g>
<g transform="translate(191.0 261)"><g transform="scale(.94)"><path d="M-8 -10H0L3 -7V5H-8Z" fill="#fff" stroke="#111" stroke-width="1.100"/><path d="M-3 -5H5L8 -2V10H-3Z" fill="#fff" stroke="#111" stroke-width="1.100"/></g></g>
<g transform="translate(219.0 261)"><g transform="scale(.94)"><rect x="-7" y="-8" width="14" height="18" rx="1.500" fill="#f7ea8a" stroke="#4a3a08" stroke-width="1.200"/><rect x="-3.500" y="-10.500" width="7" height="4" rx="1" fill="#d8d8d8" stroke="#333" stroke-width="1"/></g></g>
<g transform="translate(247.0 261)"><g transform="scale(.94)"><path d="M-10 2L-6 -4L-4 -1Q3 -6 9 3Q3 -1 -2 2L0 5Z" fill="#111"/></g><path d="M6.500 12.500H12.500V6.500Z" fill="#6e6e6e"/></g>
<g transform="translate(275.0 261)"><g transform="scale(.94)"><path d="M-5 10Q-9 3 -9 -1Q-7 -2 -5 2V-7Q-3.500 -9 -2.500 -7V-1V-9.500Q-1 -11 0 -9.500V-1V-9Q1.500 -10.500 2.500 -9V0V-6Q4 -7.500 5 -6V4Q5 8 3 10Z" fill="#f4f4f4" stroke="#222" stroke-width="1"/></g></g>
<g transform="translate(303.0 261)"><g transform="scale(.94)"><ellipse cx="0" cy="1" rx="10" ry="3.500" fill="none" stroke="#999" stroke-width="1"/><ellipse cx="0" cy="0" rx="3.500" ry="11" fill="none" stroke="#999" stroke-width="1"/><path d="M0 -4L2 -1H-2ZM-4 2L-1 0V4ZM4 3L1 1V5Z" fill="#111"/></g></g>
<g transform="translate(331.0 261)"><g transform="scale(.94)"><circle cx="2" cy="-3" r="6.500" fill="#fafafa" stroke="#222" stroke-width="1.200"/><path d="M-3 2L-10 9" stroke="#111" stroke-width="2.200"/><path d="M-1 -5H5M2 -8V-2M-1 0.500H5" stroke="#111" stroke-width="1"/></g></g>
<g transform="translate(359.0 261)"><g transform="scale(.94)"><rect x="0" y="-10" width="10" height="9" fill="none" stroke="#111" stroke-width="1" stroke-dasharray="1.500 1.500"/><circle cx="0" cy="-1" r="6.500" fill="#f4f4f4" fill-opacity=".8" stroke="#222" stroke-width="1.200"/><path d="M-5 4L-10 9" stroke="#111" stroke-width="2.200"/></g></g>
<g transform="translate(387.0 261)"><g transform="scale(.94)"><path d="M-10 -6V-10H-6M6 -10H10V-6M10 6V10H6M-6 10H-10V6" stroke="#111" stroke-width="1.800" fill="none"/><circle cx="1" cy="-2" r="6.500" fill="#fafafa" stroke="#222" stroke-width="1.200"/><path d="M-4 3L-9 8" stroke="#111" stroke-width="2.200"/></g></g>
<g transform="translate(415.0 261)"><g transform="scale(.94)"><circle cx="2" cy="-2" r="8" fill="#f4f4f4" stroke="#555" stroke-width="1.200"/><circle cx="4" cy="-5" r="3.200" fill="#f0dc3c" stroke="#8a7a10" stroke-width=".8"/><circle cx="0" cy="0" r="3.200" fill="#f0dc3c" stroke="#8a7a10" stroke-width=".8"/><path d="M-4 4L-10 10" stroke="#111" stroke-width="2.200"/></g></g>
<g transform="translate(443.5 261)"><g transform="scale(.94)"><path d="M-8 -4Q0 -12 9 -5L6 -3Q1 -8 -5 -2L-3 1L-10 2Z" fill="#111"/><circle cx="2" cy="3" r="5" fill="#fafafa" stroke="#222" stroke-width="1.200"/><path d="M-2 7L-6 11" stroke="#111" stroke-width="2"/></g><path d="M6.500 12.500H12.500V6.500Z" fill="#6e6e6e"/></g>
<g transform="translate(470.3 261)"><g transform="scale(.94)"><rect x="-10" y="-9" width="20" height="18" fill="#c9c9c9" stroke="#111" stroke-width="1.600"/><path d="M0 -9V9M-10 0H10" stroke="#111" stroke-width="1.600"/></g><path d="M6.500 12.500H12.500V6.500Z" fill="#6e6e6e"/></g>
<g transform="translate(498.4 261)"><g transform="scale(.94)"><path d="M-10 3Q-10 -1 -5 -1L-2 -5H4L6 -1Q10 -1 10 3Z" fill="#d01818" stroke="#6a0808" stroke-width=".8"/><circle cx="-5" cy="3.500" r="2.300" fill="#222"/><circle cx="5.500" cy="3.500" r="2.300" fill="#222"/></g><path d="M6.500 12.500H12.500V6.500Z" fill="#6e6e6e"/></g>
<g transform="translate(527.0 261)"><g transform="scale(.94)"><path d="M-10 6L-3 -6H9L6 6Z" fill="#e9e9e9" stroke="#bbb" stroke-width=".8"/><path d="M-7 0H8M-5 -3H9M-9 3H7M1 -6L-3 6M5 -6L2 6" stroke="#c9a0a0" stroke-width=".8"/><path d="M-1 1H8M2 -5L1 5" stroke="#d03030" stroke-width="1"/><rect x="-2.500" y="-1" width="4" height="4" fill="#fff" stroke="#111" stroke-width="1.200"/></g><path d="M6.500 12.500H12.500V6.500Z" fill="#6e6e6e"/></g>
<g transform="translate(554.7 261)"><g transform="scale(.94)"><circle cx="-1" cy="0" r="9.500" fill="#f6f6f6" stroke="#999" stroke-width="1"/><path d="M-1 0H10" stroke="#111" stroke-width="1.200"/><circle cx="-1" cy="0" r="1.800" fill="#fff" stroke="#111" stroke-width="1"/></g><path d="M6.500 12.500H12.500V6.500Z" fill="#6e6e6e"/></g>
<g transform="translate(582.8 261)"><g transform="scale(.94)"><circle cx="-5" cy="-4" r="3.500" fill="#f7e23c" stroke="#8a6a10" stroke-width=".9"/><rect x="1" y="-6" width="7" height="7" fill="#f7e23c" stroke="#8a6a10" stroke-width=".9"/><path d="M-2 2.500L1.500 8.500H-5.500Z" fill="#fff" stroke="#c07020" stroke-width=".9"/><path d="M8 -11H11V-8M-11 8V11H-8" stroke="#111" stroke-width="1.200" fill="none"/></g><path d="M6.500 12.500H12.500V6.500Z" fill="#6e6e6e"/></g>
<g transform="translate(611.0 261)"><g transform="scale(.94)"><path d="M-3 5Q-3 2 -6 -2Q-8 -8 0 -10Q8 -8 6 -2Q3 2 3 5Z" fill="#d9d9d9" stroke="#777" stroke-width="1"/><rect x="-3" y="5" width="6" height="5" rx="1" fill="#888" stroke="#555" stroke-width=".8"/></g><path d="M6.500 12.500H12.500V6.500Z" fill="#6e6e6e"/></g>
<g transform="translate(639.0 261)"><g transform="scale(.94)"><path d="M-4 -2V-6Q-4 -10 0 -10Q4 -10 4 -6V-2" stroke="#222" stroke-width="2" fill="none"/><rect x="-6.500" y="-2" width="13" height="10.500" rx="1" fill="#c4c4c4" stroke="#333" stroke-width="1.100"/><path d="M-4 1.500H4M-4 4.500H4" stroke="#eee" stroke-width="1.200"/></g><path d="M6.500 12.500H12.500V6.500Z" fill="#6e6e6e"/></g>
<g transform="translate(667.0 261)"><g transform="scale(.94)"><path d="M-10 -7L2 -3L10 -8V-2L2 3L-10 -1Z" fill="#e8401c" stroke="#6a1808" stroke-width=".8"/><path d="M-10 -1L2 3L10 -2V2L2 7L-10 3Z" fill="#f4f4f4" stroke="#888" stroke-width=".8"/><path d="M-10 3L2 7L10 2V5L2 10L-10 6Z" fill="#2c50b8" stroke="#14286a" stroke-width=".8"/></g><path d="M6.500 12.500H12.500V6.500Z" fill="#6e6e6e"/></g>
<g transform="translate(694.4 261)"><g transform="scale(.94)"><circle cx="0" cy="0" r="7.500" fill="none" stroke="#e02020" stroke-width="4"/><path d="M0 -7.500A7.500 7.500 0 0 1 6.500 3.750" fill="none" stroke="#f0a010" stroke-width="4"/><path d="M6.500 3.750A7.500 7.500 0 0 1 -3.750 6.500" fill="none" stroke="#30b030" stroke-width="4"/><path d="M-3.750 6.500A7.500 7.500 0 0 1 -7.500 0" fill="none" stroke="#2060d0" stroke-width="4"/><path d="M-7.500 0A7.500 7.500 0 0 1 0 -7.500" fill="none" stroke="#c020c0" stroke-width="4"/></g><path d="M6.500 12.500H12.500V6.500Z" fill="#6e6e6e"/></g>
<g transform="translate(722.5 261)"><g transform="scale(.94)"><circle cx="0" cy="0" r="9.500" fill="url(#sph)" stroke="#333" stroke-width="1"/><path d="M0 -9.500V9.500M-9.500 0Q0 3 9.500 0" stroke="#222" stroke-width="1.200" fill="none"/></g></g>
<g transform="translate(750.6 261)"><g transform="scale(.94)"><rect x="-12" y="-12" width="24" height="24" fill="#dcdcdc"/><path d="M-12 -6H12M-12 0H12M-12 6H12M-6 -12V12M0 -12V12M6 -12V12" stroke="#c4c4c4" stroke-width=".8"/><circle cx="0" cy="0" r="9.500" fill="url(#sph)" stroke="#333" stroke-width="1"/><path d="M0 -9.500V9.500M-9.500 0Q0 3 9.500 0" stroke="#222" stroke-width="1.200" fill="none"/></g><path d="M6.500 12.500H12.500V6.500Z" fill="#6e6e6e"/></g>
<g transform="translate(778.8 261)"><g transform="scale(.94)"><circle cx="0" cy="0" r="9.500" fill="url(#bsp)" stroke="#0a1a5a" stroke-width=".8"/></g><path d="M6.500 12.500H12.500V6.500Z" fill="#6e6e6e"/></g>
<g transform="translate(811.6 261)"><g transform="scale(.94)"><path d="M-5 -6L8 -10L4 4Z" fill="#f79a1c" stroke="#7a4a08" stroke-width=".9"/><ellipse cx="-1" cy="-1.500" rx="5.500" ry="2.200" transform="rotate(48 -1 -1.500)" fill="#ffe2a8" stroke="#7a4a08" stroke-width=".7"/></g><path d="M6.500 12.500H12.500V6.500Z" fill="#6e6e6e"/></g>
<g transform="translate(835.0 261)"><g transform="scale(.94)"><path d="M6.7 -1.9L9.4 -1.6L9.4 1.6L6.7 1.9L6.1 3.4L7.8 5.5L5.5 7.8L3.4 6.1L1.9 6.7L1.6 9.4L-1.6 9.4L-1.9 6.7L-3.4 6.1L-5.5 7.8L-7.8 5.5L-6.1 3.4L-6.7 1.9L-9.4 1.6L-9.4 -1.6L-6.7 -1.9L-6.1 -3.4L-7.8 -5.5L-5.5 -7.8L-3.4 -6.1L-1.9 -6.7L-1.6 -9.4L1.6 -9.4L1.9 -6.7L3.4 -6.1L5.5 -7.8L7.8 -5.5L6.1 -3.4Z" fill="#e8c050" stroke="#4a3808" stroke-width=".9"/><circle r="3.200" fill="#f4f4f4" stroke="#4a3808" stroke-width=".8"/><rect x="-2" y="-4.500" width="4" height="8" rx="1.200" fill="#8a9ab0" stroke="#333" stroke-width=".7"/></g><path d="M6.500 12.500H12.500V6.500Z" fill="#6e6e6e"/></g>
<g transform="translate(863.0 261)"><g transform="scale(.94)"><path d="M-9 -8V2M-9 2H-1M-1 2V9M-1 9H9M9 2V9" stroke="#111" stroke-width="1.100" fill="none"/><path d="M-9 -9H-2" stroke="#111" stroke-width="1.100"/><circle cx="-2" cy="-9" r="1.500" fill="#fff" stroke="#111" stroke-width=".9"/><circle cx="-1" cy="2" r="1.500" fill="#fff" stroke="#111" stroke-width=".9"/><circle cx="9" cy="2" r="1.500" fill="#fff" stroke="#111" stroke-width=".9"/></g><path d="M6.500 12.500H12.500V6.500Z" fill="#6e6e6e"/></g>
<g transform="translate(891.0 261)"><g transform="scale(.94)"><circle cx="0" cy="0" r="10.500" fill="url(#gsp)" stroke="#2a4a2a" stroke-width="1"/><path d="M-6 8L-3 -1L2 1L0 6L4 5L2 10Z" fill="#1a2a1a"/><path d="M-8 -5Q0 -4 9 -6M-4 -9Q-2 0 -5 9" stroke="#d8f0d8" stroke-width=".8" fill="none"/></g></g>
<g transform="translate(919.0 261)"><g transform="scale(.94)"><circle cx="0" cy="0" r="10.500" fill="url(#hsp)" stroke="#0a2080" stroke-width=".8"/><text x="0" y="6.500" text-anchor="middle" font-family="Liberation Serif, serif" font-weight="bold" font-size="18" fill="#fff">?</text></g><path d="M6.500 12.500H12.500V6.500Z" fill="#6e6e6e"/></g>
<g transform="translate(14.5 307.5)"><g transform="scale(.93)"><path d="M-4 -8V6L-1 3L1.500 8.500L3.500 7.500L1 2.500H5Z" fill="#fff" stroke="#111" stroke-width="1.100"/></g></g>
<g transform="translate(42.7 307.5)"><g transform="scale(.93)"><circle cx="0.0" cy="-1.0" r="1.8" fill="#fff" stroke="#111" stroke-width="1"/></g><path d="M6.500 12.500H12.500V6.500Z" fill="#6e6e6e"/></g>
<g transform="translate(14.5 335.6)"><g transform="scale(.93)"><path d="M-7 8L-2 -6L8 5" stroke="#111" fill="none" stroke-width="1.100"/><circle cx="-7.0" cy="8.0" r="1.6" fill="#fff" stroke="#111" stroke-width="1"/><circle cx="-2.0" cy="-6.0" r="1.6" fill="#fff" stroke="#111" stroke-width="1"/><circle cx="8.0" cy="5.0" r="1.6" fill="#fff" stroke="#111" stroke-width="1"/></g><path d="M6.500 12.500H12.500V6.500Z" fill="#6e6e6e"/></g>
<g transform="translate(42.7 335.6)"><g transform="scale(.93)"><path d="M-7 -5H-2Q8 -5 8 2Q8 9 -7 7" stroke="#111" fill="none" stroke-width="1.100"/><rect x="-9.2" y="-7.2" width="4.4" height="4.4" fill="#fff" stroke="#111" stroke-width="1.100"/><rect x="4.8" y="-10.2" width="4.4" height="4.4" fill="#fff" stroke="#111" stroke-width="1.100"/><rect x="-9.2" y="4.8" width="4.4" height="4.4" fill="#fff" stroke="#111" stroke-width="1.100"/><rect x="6.8" y="6.8" width="4.4" height="4.4" fill="#fff" stroke="#111" stroke-width="1.100"/></g><path d="M6.500 12.500H12.500V6.500Z" fill="#6e6e6e"/></g>
<g transform="translate(14.5 363.6)"><g transform="scale(.93)"><circle cx="-1" cy="1" r="9.500" stroke="#111" fill="none" stroke-width="1.100"/><path d="M-1 1L6 -5" stroke="#111" fill="none" stroke-width="1.100"/><circle cx="-1.0" cy="1.0" r="1.6" fill="#fff" stroke="#111" stroke-width="1"/><circle cx="6.0" cy="-5.0" r="1.6" fill="#fff" stroke="#111" stroke-width="1"/></g><path d="M6.500 12.500H12.500V6.500Z" fill="#6e6e6e"/></g>
<g transform="translate(42.7 363.6)"><g transform="scale(.93)"><ellipse cx="0" cy="1" rx="10" ry="7" stroke="#111" fill="none" stroke-width="1.100"/><rect x="-2.2" y="-8.2" width="4.4" height="4.4" fill="#fff" stroke="#111" stroke-width="1.100"/><rect x="-2.2" y="-1.2" width="4.4" height="4.4" fill="#fff" stroke="#111" stroke-width="1.100"/><rect x="6.8" y="-1.2" width="4.4" height="4.4" fill="#fff" stroke="#111" stroke-width="1.100"/></g><path d="M6.500 12.500H12.500V6.500Z" fill="#6e6e6e"/></g>
<g transform="translate(14.5 391.7)"><g transform="scale(.93)"><path d="M-8 -9Q6 -6 8 1L-8 9Z" stroke="#111" fill="none" stroke-width="1.100"/><circle cx="-8.0" cy="-9.0" r="1.6" fill="#fff" stroke="#111" stroke-width="1"/><circle cx="8.0" cy="1.0" r="1.6" fill="#fff" stroke="#111" stroke-width="1"/><circle cx="-8.0" cy="9.0" r="1.6" fill="#fff" stroke="#111" stroke-width="1"/></g><path d="M6.500 12.500H12.500V6.500Z" fill="#6e6e6e"/></g>
<g transform="translate(42.7 391.7)"><g transform="scale(.93)"><rect x="-9" y="-6" width="18" height="12" stroke="#111" fill="none" stroke-width="1.100"/><circle cx="9.0" cy="-6.0" r="1.6" fill="#fff" stroke="#111" stroke-width="1"/><circle cx="-9.0" cy="6.0" r="1.6" fill="#fff" stroke="#111" stroke-width="1"/></g><path d="M6.500 12.500H12.500V6.500Z" fill="#6e6e6e"/></g>
<g transform="translate(14.5 419.8)"><g transform="scale(.93)"><path d="M-9 1L-4.500 -7H4.500L9 1L4.500 9H-4.500Z" stroke="#111" fill="none" stroke-width="1.100"/><path d="M0 1H9" stroke="#111" fill="none" stroke-width="1.100"/><circle cx="0.0" cy="1.0" r="1.6" fill="#fff" stroke="#111" stroke-width="1"/><circle cx="9.0" cy="1.0" r="1.6" fill="#fff" stroke="#111" stroke-width="1"/></g><path d="M6.500 12.500H12.500V6.500Z" fill="#6e6e6e"/></g>
<g transform="translate(42.7 419.8)"><g transform="scale(.93)"><path d="M-8 -7H-2Q8 -7 8 3V9" stroke="#111" stroke-width="2.400" fill="none"/><path d="M2 -7H8V-1" stroke="#bbb" stroke-width="1" fill="none"/><rect x="-10.2" y="-9.2" width="4.4" height="4.4" fill="#fff" stroke="#111" stroke-width="1.100"/><rect x="5.8" y="6.8" width="4.4" height="4.4" fill="#fff" stroke="#111" stroke-width="1.100"/></g><path d="M6.500 12.500H12.500V6.500Z" fill="#6e6e6e"/></g>
<g transform="translate(14.5 447.9)"><g transform="scale(.93)"><path d="M-7 -8L6 -8L4 3L1 9L-10 4Z" fill="#5b74d8" stroke="#26308a" stroke-width="1"/><path d="M-1 -8L-4 7M-8 -2L5 -1" stroke="#a9b7f2" stroke-width="1"/><rect x="-9.2" y="-10.2" width="4.4" height="4.4" fill="#fff" stroke="#111" stroke-width="1.100"/><rect x="3.8" y="-10.2" width="4.4" height="4.4" fill="#fff" stroke="#111" stroke-width="1.100"/><rect x="-12.2" y="1.8" width="4.4" height="4.4" fill="#fff" stroke="#111" stroke-width="1.100"/><rect x="-1.2" y="6.8" width="4.4" height="4.4" fill="#fff" stroke="#111" stroke-width="1.100"/></g><path d="M6.500 12.500H12.500V6.500Z" fill="#6e6e6e"/></g>
<g transform="translate(42.7 447.9)"><g transform="scale(.93)"><path d="M-9 -5L-4 -10H4L0 -5Z" fill="#fff" stroke="#111" stroke-width="1"/><path d="M-9 -5H0Q8 -4 8 5L4 10V3Q3 -2 -4 -2Z" fill="#5b74d8" stroke="#26308a" stroke-width="1"/><path d="M8 5L4 10V4L8 -1Z" fill="#fff" stroke="#111" stroke-width="1"/></g><path d="M6.500 12.500H12.500V6.500Z" fill="#6e6e6e"/></g>
<g transform="translate(14.5 475.9)"><g transform="scale(.93)"><path d="M-9 -5L1 -9L9 -6V5L-1 10L-9 6Z" fill="#5b74d8" stroke="#26308a" stroke-width=".8"/><path d="M-9 -5L-1 -1L9 -6L1 -9Z" fill="#a9b7f2"/><path d="M-1 -1V10L9 5V-6Z" fill="#3a4ab0"/></g><path d="M6.500 12.500H12.500V6.500Z" fill="#6e6e6e"/></g>
<g transform="translate(42.7 475.9)"><g transform="scale(.93)"><circle cx="4" cy="-4" r="7" fill="url(#bl2)" stroke="#26308a" stroke-width="1"/><circle cx="-3" cy="4" r="7.500" fill="url(#bl2)" stroke="#26308a" stroke-width="1"/><path d="M-10 4Q-3 7 4.500 4M-3 -3.500Q-1 4 -3 11.500" stroke="#26308a" stroke-width=".8" fill="none"/></g><path d="M6.500 12.500H12.500V6.500Z" fill="#6e6e6e"/></g>
<g transform="translate(14.5 504.0)"><g transform="scale(.93)"><ellipse cx="0" cy="-9" rx="6" ry="2.300" fill="none" stroke="#333" stroke-width="1"/><path d="M-11 -3Q0 2 11 -3V8Q0 12 -11 8Z" fill="#5b74d8" stroke="#26308a" stroke-width=".8"/><ellipse cx="0" cy="5" rx="6" ry="2.800" fill="none" stroke="#fff" stroke-width="1.800"/></g><path d="M6.500 12.500H12.500V6.500Z" fill="#6e6e6e"/></g>
<g transform="translate(42.7 504.0)"><g transform="scale(.93)"><path d="M-4 -9Q2 -7 7 -9L10 -2Q6 3 5 8Q0 6 -10 5Q-5 -2 -4 -9Z" fill="#5b74d8" stroke="#26308a" stroke-width=".8"/><path d="M2 -8Q0 0 -2 6M-7 -1Q0 1 8 -1" stroke="#26308a" stroke-width="1" fill="none"/></g><path d="M6.500 12.500H12.500V6.500Z" fill="#6e6e6e"/></g>
<g transform="translate(14.5 532.1)"><g transform="scale(.93)"><path d="M-10 -6H-6Q-7 -10 -3.500 -10Q0 -10 -1 -6H3V-2Q6 -3 6 0Q6 3 3 2V5H-10Z" fill="#f0a818" stroke="#5a3a08" stroke-width=".9"/><path d="M-2 2H2Q1 -1 4.500 -1Q8 -1 7 2H11V6Q8 5 8 8Q8 11 11 10V12H-2Z" fill="#fff" stroke="#5a3a08" stroke-width=".9" transform="translate(-1 -1) scale(.9)"/></g></g>
<g transform="translate(42.7 532.1)"><g transform="scale(.93)"><path d="M-11 10L-6 -4L-2 3L5 -11L6 1L12 -2L4 10Z" fill="#f7a818"/><path d="M-11 10L-6 -4L-2 3L5 -11" stroke="#222" stroke-width="1.300" fill="none"/></g></g>
<g transform="translate(14.5 560.1)"><g transform="scale(.93)"><path d="M2 -11H7L3 -1H-1Z" fill="#26308a"/><rect x="-11" y="-3" width="14" height="6" fill="#fff" stroke="#111" stroke-width="1.100"/><path d="M3 2L9 8L5 12L-1 6Z" fill="#fff" stroke="#555" stroke-width="1"/></g></g>
<g transform="translate(42.7 560.1)"><g transform="scale(.93)"><path d="M2 -11H8L5 -1H0Z" fill="#26308a"/><rect x="-10" y="-2" width="20" height="7" fill="#fff" stroke="#111" stroke-width="1.100"/><path d="M1 -2L0 5" stroke="#111"/></g></g>
<g transform="translate(14.5 588.2)"><g transform="scale(.93)"><circle cx="0" cy="-3" r="5.500" fill="#a9b7f2" stroke="#111" stroke-width="1.400"/><circle cx="4" cy="3" r="5" fill="#1a1a6a" stroke="#111" stroke-width="1.400"/><circle cx="-4" cy="3" r="4.500" fill="#fff" stroke="#111" stroke-width="1.400"/></g><path d="M6.500 12.500H12.500V6.500Z" fill="#6e6e6e"/></g>
<g transform="translate(42.7 588.2)"><g transform="scale(.93)"><circle cx="0" cy="-6" r="3.800" fill="#a9b7f2" stroke="#445" stroke-width=".8"/><circle cx="6" cy="3" r="4" fill="#1a1a6a"/><circle cx="-6" cy="3" r="3.800" fill="#fff" stroke="#333" stroke-width=".9"/></g></g>
<g transform="translate(14.5 616.3)"><g transform="scale(.93)"><path d="M-9 -6Q3 -8 5 9M5 9L2.500 5M5 9L7 5" stroke="#111" stroke-width="1.500" fill="none"/><rect x="-6.8" y="-8.8" width="3.6" height="3.6" fill="#fff" stroke="#111" stroke-width="1.100"/><rect x="3.2" y="1.2" width="3.6" height="3.6" fill="#fff" stroke="#111" stroke-width="1.100"/></g></g>
<g transform="translate(42.7 616.3)"><g transform="scale(.93)"><path d="M-9 -7Q6 -6 8 10" stroke="#111" stroke-width="2" fill="none"/><path d="M-9 -10H-1M9 -1V9" stroke="#111" stroke-width="1" stroke-dasharray="1.500 1.500"/><rect x="-1.8" y="-11.8" width="3.6" height="3.6" fill="#fff" stroke="#111" stroke-width="1.100"/><rect x="7.2" y="-3.8" width="3.6" height="3.6" fill="#fff" stroke="#111" stroke-width="1.100"/></g><path d="M6.500 12.500H12.500V6.500Z" fill="#6e6e6e"/></g>
<g transform="translate(14.5 644.3)"><g transform="scale(.93)"><text x="0" y="10.500" text-anchor="middle" font-family="Liberation Serif, serif" font-weight="bold" font-size="29" fill="#5b74d8" stroke="#26308a" stroke-width=".9">T</text></g></g>
<g transform="translate(42.7 644.3)"><g transform="scale(.93)"><rect x="2" y="-10" width="7" height="7" fill="#5b74d8" stroke="#26308a" stroke-width="1"/><rect x="-9" y="3" width="6" height="6" fill="#fff" stroke="#111" stroke-width="1"/><path d="M-3 3L2 -2M2 -2H-1M2 -2V1" stroke="#111" stroke-width="1" fill="none"/></g><path d="M6.500 12.500H12.500V6.500Z" fill="#6e6e6e"/></g>
<g transform="translate(14.5 672.4)"><g transform="scale(.93)"><rect x="-10" y="-10" width="6.500" height="6.500" fill="#5b74d8" stroke="#26308a"/><rect x="0" y="-6" width="6.500" height="6.500" fill="#a9b7f2" stroke="#26308a"/><rect x="-3" y="-3" width="6.500" height="6.500" fill="#5b74d8" stroke="#26308a"/><rect x="-10" y="3" width="6.500" height="6.500" fill="#fff" stroke="#111"/><rect x="2" y="4" width="6.500" height="6.500" fill="#5b74d8" stroke="#26308a"/></g></g>
<g transform="translate(42.7 672.4)"><g transform="scale(.93)"><rect x="-11" y="-9" width="5.500" height="14" fill="#fff" stroke="#111" stroke-width="1.100"/><path d="M-1 6L7 -3L11 1L3 10Z" fill="#5b74d8" stroke="#26308a" stroke-width="1"/><path d="M-5 -5Q2 -6 3 -1M3 -1L0 -2M3 -1L4 -4" stroke="#111" stroke-width="1" fill="none"/></g></g>
<g transform="translate(14.5 700.5)"><g transform="scale(.93)"><path d="M-10 -5L-2 -10L10 -6V6L0 11L-10 6Z" fill="#5b74d8" stroke="#26308a" stroke-width=".8"/><path d="M-10 -5L0 -1L10 -6L-2 -10Z" fill="#a9b7f2"/><path d="M-4 3L2 1V11L-4 8Z" fill="#fff" stroke="#333" stroke-width=".8"/><path d="M2 1L6 3V9L2 11Z" fill="#ddd"/></g><path d="M6.500 12.500H12.500V6.500Z" fill="#6e6e6e"/></g>
<g transform="translate(42.7 700.5)"><g transform="scale(.93)"><path d="M-11 10L-6 5H11L6 10Z" fill="#5b74d8" stroke="#26308a" stroke-width=".8"/><path d="M-5 6V-8M0 6V-8M5 6V-8" stroke="#fff" stroke-width="1.800" stroke-dasharray="3 1.500"/><path d="M-5 -10L-7 -6H-3ZM0 -10L-2 -6H2ZM5 -10L3 -6H7Z" fill="#fff"/></g><path d="M6.500 12.500H12.500V6.500Z" fill="#6e6e6e"/></g>
<g transform="translate(14.5 728.5)"><g transform="scale(.93)"><rect x="-10" y="-10" width="5" height="5" fill="#5b74d8" stroke="#111" stroke-width="1"/><rect x="-2" y="-10" width="5" height="5" fill="#5b74d8" stroke="#111" stroke-width="1"/><rect x="5" y="-10" width="5" height="5" fill="#5b74d8" stroke="#111" stroke-width="1"/><rect x="-10" y="-2" width="5" height="5" fill="#5b74d8" stroke="#111" stroke-width="1"/><rect x="-2" y="-2" width="5" height="5" fill="#5b74d8" stroke="#111" stroke-width="1"/><rect x="5" y="-2" width="5" height="5" fill="#5b74d8" stroke="#111" stroke-width="1"/><rect x="-10" y="5" width="5" height="5" fill="#fff" stroke="#111" stroke-width="1"/><rect x="-2" y="5" width="5" height="5" fill="#5b74d8" stroke="#111" stroke-width="1"/><rect x="5" y="5" width="5" height="5" fill="#5b74d8" stroke="#111" stroke-width="1"/></g><path d="M6.500 12.500H12.500V6.500Z" fill="#6e6e6e"/></g>
<g transform="translate(42.7 728.5)"><g transform="scale(.93)"><rect x="-4.500" y="-9" width="9" height="5" fill="#fff" stroke="#111"/><rect x="-3.500" y="-2.500" width="7" height="5" fill="#fff" stroke="#111"/><rect x="-4.500" y="4" width="9" height="6" fill="#fff" stroke="#111"/><path d="M0 -11V11" stroke="#d02020" stroke-width="1.800"/></g><path d="M6.500 12.500H12.500V6.500Z" fill="#6e6e6e"/></g>
<g transform="translate(14.5 756.6)"><g transform="scale(.93)"><path d="M-10 -6L-4 -9L-2 5L-8 9Z" fill="#f4f4f4" stroke="#333" stroke-width="1"/><path d="M2 -8L9 -5L4 9L-3 6Z" fill="#5b74d8" stroke="#26308a" stroke-width="1"/><path d="M-3 -10L0 -4L3 -10" stroke="#333" fill="#ddd" stroke-width=".8"/></g><path d="M6.500 12.500H12.500V6.500Z" fill="#6e6e6e"/></g>
<g transform="translate(42.7 756.6)"><g transform="scale(.93)"><path d="M-9 2L-3 8L10 -9" stroke="#111" stroke-width="3" fill="none"/></g><path d="M6.500 12.500H12.500V6.500Z" fill="#6e6e6e"/></g>
<g transform="translate(14.5 784.7)"><g transform="scale(.93)"><path d="M-10 -3L-4 -7L2 -4V5L-4 8L-10 5Z" fill="#c9c9c9" stroke="#333" stroke-width=".9"/><path d="M4 -6L11 8Q6 11 0 8Z" fill="#b4b4b4" stroke="#333" stroke-width=".9"/></g><path d="M6.500 12.500H12.500V6.500Z" fill="#6e6e6e"/></g>
<g transform="translate(42.7 784.7)"><g transform="scale(.93)"><path d="M-10 6L0 -3L10 6L0 11Z" fill="#f7c860" stroke="#6a4a08" stroke-width=".9"/><path d="M0 -3V11" stroke="#b88a20" stroke-width=".8"/><path d="M-2 -8L5 -11V-6Z" fill="#888"/><rect x="5" y="-12" width="5" height="5" fill="#222"/></g><path d="M6.500 12.500H12.500V6.500Z" fill="#6e6e6e"/></g>
</svg>
<div class="b" style="left:6.00px;top:250.00px;width:1.00px;height:24.00px;background:#cfd2d9;"></div>
<div class="b" style="left:8.00px;top:290.00px;width:50.00px;height:1.00px;background:#d4d7de;"></div>
<div class="b" style="left:62.00px;top:285.00px;width:3.00px;height:1022.00px;background:#e3e5ea;"></div>
<div class="b" style="left:1156.00px;top:274.00px;width:1385.00px;height:913.00px;background:#f0f0f0;border:1px solid #3478b8;box-sizing:border-box;box-shadow:0 3px 12px rgba(0,0,0,.32);"></div>
<div class="b" style="left:1157.00px;top:275.00px;width:1383.00px;height:37.00px;background:#ffffff;box-shadow:inset 1px 1px 0 #e4fbff;"></div>
<span class="t" style="left:1166.40px;top:285.10px;font-size:15.00px;line-height:18.00px;color:#111;letter-spacing:-0.191px;">Grasshopper - unnamed</span>
<svg class="b" style="left:2370px;top:276px" width="165" height="35" viewBox="2370 276 165 35" fill="none" stroke="#111" stroke-width="1.200"><path d="M2387 292.500H2399"/><rect x="2445.500" y="287.500" width="11" height="11"/><path d="M2504 287L2516 299M2516 287L2504 299"/></svg>
<div class="b" style="left:1157.00px;top:312.00px;width:1383.00px;height:34.00px;background:linear-gradient(90deg,#f1f1f1,#f6f6f6 60%,#fbfbfb);"></div>
<span class="t" style="left:1172.00px;top:321.03px;font-size:15.50px;line-height:18.60px;color:#111;letter-spacing:-0.495px;">File</span>
<span class="t" style="left:1216.00px;top:321.03px;font-size:15.50px;line-height:18.60px;color:#111;letter-spacing:-0.178px;">Edit</span>
<span class="t" style="left:1263.00px;top:321.03px;font-size:15.50px;line-height:18.60px;color:#111;letter-spacing:-0.330px;">View</span>
<span class="t" style="left:1316.00px;top:321.03px;font-size:15.50px;line-height:18.60px;color:#111;letter-spacing:-0.261px;">Display</span>
<span class="t" style="left:1386.00px;top:321.03px;font-size:15.50px;line-height:18.60px;color:#111;letter-spacing:-0.127px;">Solution</span>
<span class="t" style="left:1462.00px;top:321.03px;font-size:15.50px;line-height:18.60px;color:#111;letter-spacing:0.029px;">Help</span>
<span class="t" style="left:2467.00px;top:321.03px;font-size:15.50px;line-height:18.60px;color:#111;letter-spacing:-0.377px;">unnamed</span>
<div class="b" style="left:1157.00px;top:346.00px;width:1383.00px;height:28.00px;background:#f0f0f0;"></div>
<div class="b" style="left:1157.00px;top:373.00px;width:1382.00px;height:74.00px;background:linear-gradient(#d9d9d9,#eeeeee 30%,#f1f1f1);border-top:1px solid #a9a9a9;border-radius:0 9px 0 0;"></div>
<svg class="b" style="left:1158px;top:346px" width="80" height="30" viewBox="1158 346 80 30"><path d="M1158 376V354Q1158 347.500 1165 347.500H1216Q1223 347.500 1223 354V368Q1223 373.500 1229 373.500H1238V376Z" fill="#fbfbfb"/><path d="M1158.500 374V354Q1158.500 347.500 1165 347.500H1216Q1223 347.500 1223 354V368Q1223 373.500 1229 373.500" fill="none" stroke="#b5b5b5"/></svg>
<span class="t" style="left:1167.00px;top:350.75px;font-size:14.00px;line-height:16.80px;color:#111;letter-spacing:-0.706px;">Params</span>
<span class="t" style="left:1233.00px;top:353.25px;font-size:14.00px;line-height:16.80px;color:#7a7a7a;letter-spacing:-0.625px;">Maths</span>
<span class="t" style="left:1289.00px;top:353.25px;font-size:14.00px;line-height:16.80px;color:#7a7a7a;letter-spacing:-0.504px;">Sets</span>
<span class="t" style="left:1337.00px;top:353.25px;font-size:14.00px;line-height:16.80px;color:#7a7a7a;letter-spacing:-0.282px;">Vector</span>
<span class="t" style="left:1396.00px;top:353.25px;font-size:14.00px;line-height:16.80px;color:#7a7a7a;letter-spacing:-0.669px;">Curve</span>
<span class="t" style="left:1451.00px;top:353.25px;font-size:14.00px;line-height:16.80px;color:#7a7a7a;letter-spacing:-0.464px;">Surface</span>
<span class="t" style="left:1518.00px;top:353.25px;font-size:14.00px;line-height:16.80px;color:#7a7a7a;letter-spacing:-0.559px;">Mesh</span>
<span class="t" style="left:1570.00px;top:353.25px;font-size:14.00px;line-height:16.80px;color:#7a7a7a;letter-spacing:-0.299px;">Intersect</span>
<span class="t" style="left:1642.00px;top:353.25px;font-size:14.00px;line-height:16.80px;color:#7a7a7a;letter-spacing:-0.474px;">Transform</span>
<span class="t" style="left:1722.00px;top:353.25px;font-size:14.00px;line-height:16.80px;color:#7a7a7a;letter-spacing:-0.414px;">Display</span>
<span class="t" style="left:1786.00px;top:353.25px;font-size:14.00px;line-height:16.80px;color:#7a7a7a;letter-spacing:-1.000px;">Wb</span>
<span class="t" style="left:1826.00px;top:353.25px;font-size:14.00px;line-height:16.80px;color:#7a7a7a;letter-spacing:-0.541px;">Quokka</span>
<span class="t" style="left:1893.00px;top:353.25px;font-size:14.00px;line-height:16.80px;color:#7a7a7a;letter-spacing:-0.471px;">Millipede</span>
<span class="t" style="left:1967.00px;top:353.25px;font-size:14.00px;line-height:16.80px;color:#7a7a7a;letter-spacing:-0.722px;">Kangaroo2</span>
<span class="t" style="left:2050.00px;top:353.25px;font-size:14.00px;line-height:16.80px;color:#7a7a7a;letter-spacing:-0.640px;">User</span>
<span class="t" style="left:2098.00px;top:353.25px;font-size:14.00px;line-height:16.80px;color:#7a7a7a;letter-spacing:-0.920px;">M+</span>
<span class="t" style="left:2137.00px;top:353.25px;font-size:14.00px;line-height:16.80px;color:#7a7a7a;letter-spacing:-0.208px;">Volvox</span>
<span class="t" style="left:2198.00px;top:353.25px;font-size:14.00px;line-height:16.80px;color:#7a7a7a;letter-spacing:-0.520px;">Bengesht</span>
<span class="t" style="left:2274.00px;top:353.25px;font-size:14.00px;line-height:16.80px;color:#7a7a7a;letter-spacing:-0.705px;">ROS.GH</span>
<span class="t" style="left:2347.00px;top:353.25px;font-size:14.00px;line-height:16.80px;color:#7a7a7a;letter-spacing:-0.356px;">TopOpt</span>
<span class="t" style="left:2411.00px;top:353.25px;font-size:14.00px;line-height:16.80px;color:#7a7a7a;letter-spacing:-0.287px;">Tarsier</span>
<span class="t" style="left:2473.00px;top:353.25px;font-size:14.00px;line-height:16.80px;color:#7a7a7a;letter-spacing:-0.714px;">Kangaroo</span>
<div class="b" style="left:1161.00px;top:378.00px;width:554.00px;height:55.00px;background:linear-gradient(#e3e3e3,#f4f4f4 35%,#ededed);border:1px solid #9c9c9c;border-radius:6px;box-sizing:border-box;"></div>
<div class="b" style="left:1161.00px;top:415.00px;width:554.00px;height:18.00px;background:linear-gradient(#3a3a3a,#111 45%,#161616);border-radius:0 0 6px 6px;"></div>
<span class="t" style="left:1405.76px;top:417.12px;font-size:11.50px;line-height:13.80px;color:#fff;">Geometry</span>
<svg class="b" style="left:1703px;top:420px" width="9" height="9"><path d="M4.500 0V8M1 5L4.500 8.500L8 5" stroke="#999" stroke-width="1.800" fill="none"/></svg>
<div class="b" style="left:1719.00px;top:378.00px;width:144.00px;height:55.00px;background:linear-gradient(#e3e3e3,#f4f4f4 35%,#ededed);border:1px solid #9c9c9c;border-radius:6px;box-sizing:border-box;"></div>
<div class="b" style="left:1719.00px;top:415.00px;width:144.00px;height:18.00px;background:linear-gradient(#3a3a3a,#111 45%,#161616);border-radius:0 0 6px 6px;"></div>
<span class="t" style="left:1761.96px;top:417.12px;font-size:11.50px;line-height:13.80px;color:#fff;">Primitive</span>
<svg class="b" style="left:1851px;top:420px" width="9" height="9"><path d="M4.500 0V8M1 5L4.500 8.500L8 5" stroke="#999" stroke-width="1.800" fill="none"/></svg>
<div class="b" style="left:1868.00px;top:378.00px;width:309.00px;height:55.00px;background:linear-gradient(#e3e3e3,#f4f4f4 35%,#ededed);border:1px solid #9c9c9c;border-radius:6px;box-sizing:border-box;"></div>
<div class="b" style="left:1868.00px;top:415.00px;width:309.00px;height:18.00px;background:linear-gradient(#3a3a3a,#111 45%,#161616);border-radius:0 0 6px 6px;"></div>
<span class="t" style="left:2002.71px;top:417.12px;font-size:11.50px;line-height:13.80px;color:#fff;">Input</span>
<svg class="b" style="left:2165px;top:420px" width="9" height="9"><path d="M4.500 0V8M1 5L4.500 8.500L8 5" stroke="#999" stroke-width="1.800" fill="none"/></svg>
<div class="b" style="left:2181.00px;top:378.00px;width:239.00px;height:55.00px;background:linear-gradient(#e3e3e3,#f4f4f4 35%,#ededed);border:1px solid #9c9c9c;border-radius:6px;box-sizing:border-box;"></div>
<div class="b" style="left:2181.00px;top:415.00px;width:239.00px;height:18.00px;background:linear-gradient(#3a3a3a,#111 45%,#161616);border-radius:0 0 6px 6px;"></div>
<span class="t" style="left:2285.20px;top:417.12px;font-size:11.50px;line-height:13.80px;color:#fff;">Util</span>
<svg class="b" style="left:2408px;top:420px" width="9" height="9"><path d="M4.500 0V8M1 5L4.500 8.500L8 5" stroke="#999" stroke-width="1.800" fill="none"/></svg>
<svg class="b" style="left:1157px;top:376px" width="1384" height="42" viewBox="1157 376 1384 42"><defs><linearGradient id="hx" x1="0" y1="0" x2="0" y2="1"><stop offset="0" stop-color="#5a5a5a"/><stop offset=".45" stop-color="#1c1c1c"/><stop offset="1" stop-color="#000"/></linearGradient></defs><path d="M1166.2 396.500L1173.5 384H1188.5L1195.8 396.500L1188.5 409H1173.5Z" fill="url(#hx)" stroke="#3a3a3a" stroke-width="1.200" stroke-linejoin="round"/><path d="M1168.5 396.500L1174.7 386H1187.3L1193.5 396.500L1187.3 407H1174.7Z" fill="none" stroke="#777" stroke-opacity=".55" stroke-width="1"/><path d="M1201.2 396.500L1208.5 384H1223.5L1230.8 396.500L1223.5 409H1208.5Z" fill="url(#hx)" stroke="#3a3a3a" stroke-width="1.200" stroke-linejoin="round"/><path d="M1203.5 396.500L1209.7 386H1222.3L1228.5 396.500L1222.3 407H1209.7Z" fill="none" stroke="#777" stroke-opacity=".55" stroke-width="1"/><path d="M1247.2 396.500L1254.5 384H1269.5L1276.8 396.500L1269.5 409H1254.5Z" fill="url(#hx)" stroke="#3a3a3a" stroke-width="1.200" stroke-linejoin="round"/><path d="M1249.5 396.500L1255.7 386H1268.3L1274.5 396.500L1268.3 407H1255.7Z" fill="none" stroke="#777" stroke-opacity=".55" stroke-width="1"/><path d="M1282.2 396.500L1289.5 384H1304.5L1311.8 396.500L1304.5 409H1289.5Z" fill="url(#hx)" stroke="#3a3a3a" stroke-width="1.200" stroke-linejoin="round"/><path d="M1284.5 396.500L1290.7 386H1303.3L1309.5 396.500L1303.3 407H1290.7Z" fill="none" stroke="#777" stroke-opacity=".55" stroke-width="1"/><path d="M1317.2 396.500L1324.5 384H1339.5L1346.8 396.500L1339.5 409H1324.5Z" fill="url(#hx)" stroke="#3a3a3a" stroke-width="1.200" stroke-linejoin="round"/><path d="M1319.5 396.500L1325.7 386H1338.3L1344.5 396.500L1338.3 407H1325.7Z" fill="none" stroke="#777" stroke-opacity=".55" stroke-width="1"/><path d="M1352.2 396.500L1359.5 384H1374.5L1381.8 396.500L1374.5 409H1359.5Z" fill="url(#hx)" stroke="#3a3a3a" stroke-width="1.200" stroke-linejoin="round"/><path d="M1354.5 396.500L1360.7 386H1373.3L1379.5 396.500L1373.3 407H1360.7Z" fill="none" stroke="#777" stroke-opacity=".55" stroke-width="1"/><path d="M1387.2 396.500L1394.5 384H1409.5L1416.8 396.500L1409.5 409H1394.5Z" fill="url(#hx)" stroke="#3a3a3a" stroke-width="1.200" stroke-linejoin="round"/><path d="M1389.5 396.500L1395.7 386H1408.3L1414.5 396.500L1408.3 407H1395.7Z" fill="none" stroke="#777" stroke-opacity=".55" stroke-width="1"/><path d="M1422.2 396.500L1429.5 384H1444.5L1451.8 396.500L1444.5 409H1429.5Z" fill="url(#hx)" stroke="#3a3a3a" stroke-width="1.200" stroke-linejoin="round"/><path d="M1424.5 396.500L1430.7 386H1443.3L1449.5 396.500L1443.3 407H1430.7Z" fill="none" stroke="#777" stroke-opacity=".55" stroke-width="1"/><path d="M1469.2 396.500L1476.5 384H1491.5L1498.8 396.500L1491.5 409H1476.5Z" fill="url(#hx)" stroke="#3a3a3a" stroke-width="1.200" stroke-linejoin="round"/><path d="M1471.5 396.500L1477.7 386H1490.3L1496.5 396.500L1490.3 407H1477.7Z" fill="none" stroke="#777" stroke-opacity=".55" stroke-width="1"/><path d="M1504.2 396.500L1511.5 384H1526.5L1533.8 396.500L1526.5 409H1511.5Z" fill="url(#hx)" stroke="#3a3a3a" stroke-width="1.200" stroke-linejoin="round"/><path d="M1506.5 396.500L1512.7 386H1525.3L1531.5 396.500L1525.3 407H1512.7Z" fill="none" stroke="#777" stroke-opacity=".55" stroke-width="1"/><path d="M1539.2 396.500L1546.5 384H1561.5L1568.8 396.500L1561.5 409H1546.5Z" fill="url(#hx)" stroke="#3a3a3a" stroke-width="1.200" stroke-linejoin="round"/><path d="M1541.5 396.500L1547.7 386H1560.3L1566.5 396.500L1560.3 407H1547.7Z" fill="none" stroke="#777" stroke-opacity=".55" stroke-width="1"/><path d="M1574.2 396.500L1581.5 384H1596.5L1603.8 396.500L1596.5 409H1581.5Z" fill="url(#hx)" stroke="#3a3a3a" stroke-width="1.200" stroke-linejoin="round"/><path d="M1576.5 396.500L1582.7 386H1595.3L1601.5 396.500L1595.3 407H1582.7Z" fill="none" stroke="#777" stroke-opacity=".55" stroke-width="1"/><path d="M1609.2 396.500L1616.5 384H1631.5L1638.8 396.500L1631.5 409H1616.5Z" fill="url(#hx)" stroke="#3a3a3a" stroke-width="1.200" stroke-linejoin="round"/><path d="M1611.5 396.500L1617.7 386H1630.3L1636.5 396.500L1630.3 407H1617.7Z" fill="none" stroke="#777" stroke-opacity=".55" stroke-width="1"/><path d="M1644.2 396.500L1651.5 384H1666.5L1673.8 396.500L1666.5 409H1651.5Z" fill="url(#hx)" stroke="#3a3a3a" stroke-width="1.200" stroke-linejoin="round"/><path d="M1646.5 396.500L1652.7 386H1665.3L1671.5 396.500L1665.3 407H1652.7Z" fill="none" stroke="#777" stroke-opacity=".55" stroke-width="1"/><path d="M1679.2 396.500L1686.5 384H1701.5L1708.8 396.500L1701.5 409H1686.5Z" fill="url(#hx)" stroke="#3a3a3a" stroke-width="1.200" stroke-linejoin="round"/><path d="M1681.5 396.500L1687.7 386H1700.3L1706.5 396.500L1700.3 407H1687.7Z" fill="none" stroke="#777" stroke-opacity=".55" stroke-width="1"/><path d="M1724.2 396.500L1731.5 384H1746.5L1753.8 396.500L1746.5 409H1731.5Z" fill="url(#hx)" stroke="#3a3a3a" stroke-width="1.200" stroke-linejoin="round"/><path d="M1726.5 396.500L1732.7 386H1745.3L1751.5 396.500L1745.3 407H1732.7Z" fill="none" stroke="#777" stroke-opacity=".55" stroke-width="1"/><path d="M1759.2 396.500L1766.5 384H1781.5L1788.8 396.500L1781.5 409H1766.5Z" fill="url(#hx)" stroke="#3a3a3a" stroke-width="1.200" stroke-linejoin="round"/><path d="M1761.5 396.500L1767.7 386H1780.3L1786.5 396.500L1780.3 407H1767.7Z" fill="none" stroke="#777" stroke-opacity=".55" stroke-width="1"/><path d="M1794.2 396.500L1801.5 384H1816.5L1823.8 396.500L1816.5 409H1801.5Z" fill="url(#hx)" stroke="#3a3a3a" stroke-width="1.200" stroke-linejoin="round"/><path d="M1796.5 396.500L1802.7 386H1815.3L1821.5 396.500L1815.3 407H1802.7Z" fill="none" stroke="#777" stroke-opacity=".55" stroke-width="1"/><path d="M1829.2 396.500L1836.5 384H1851.5L1858.8 396.500L1851.5 409H1836.5Z" fill="url(#hx)" stroke="#3a3a3a" stroke-width="1.200" stroke-linejoin="round"/><path d="M1831.5 396.500L1837.7 386H1850.3L1856.5 396.500L1850.3 407H1837.7Z" fill="none" stroke="#777" stroke-opacity=".55" stroke-width="1"/><path d="M1176.500 392.500L1185.500 401.500M1185.500 392.500L1176.500 401.500" stroke="#f2f2f2" fill="none" stroke-width="2.600" stroke-linecap="round"/><path d="M1210 403L1221 392M1214.500 391.500H1221.500V398.500" stroke="#f2f2f2" fill="none" stroke-width="2.600" stroke-linecap="round"/><ellipse cx="1262" cy="397" rx="8.500" ry="6" stroke="#f2f2f2" fill="none" stroke-width="2.600" stroke-linecap="round"/><path d="M1292 390Q1300 393 1301 404M1297 404.500H1305" stroke="#f2f2f2" fill="none"  stroke-linecap="round" stroke-width="2.200"/><ellipse cx="1332" cy="397" rx="8" ry="4.500" transform="rotate(-30 1332 397)" stroke="#aaa" fill="none" stroke-width="1.500"/><ellipse cx="1332" cy="397" rx="4.500" ry="2.200" transform="rotate(-30 1332 397)" stroke="#888" fill="none" stroke-width="1.200"/><path d="M1361.500 403L1373 391.500" stroke="#f2f2f2" fill="none"  stroke-linecap="round" stroke-width="2"/><rect x="1359" y="401" width="4.500" height="4.500" fill="#f2f2f2"/><rect x="1371" y="389.500" width="4.500" height="4.500" fill="#f2f2f2"/><path d="M1394 394L1408 390.500L1411 398L1396 404Z" stroke="#ddd" fill="#555" stroke-width="2"/><path d="M1437 388.500L1445.500 397L1437 405.500L1428.500 397Z" stroke="#eee" fill="none" stroke-width="1.800"/><path d="M1477 392L1486 389L1492 391.500V402L1483 405.500L1477 402Z" fill="#c9c9c9" stroke="#888"/><path d="M1477 392L1483 395L1492 391.500M1483 395V405.500" stroke="#888" fill="none"/><ellipse cx="1519" cy="397" rx="6" ry="8.500" transform="rotate(35 1519 397)" fill="#bdbdbd" stroke="#eee" stroke-width="1.200"/><path d="M1545 401Q1543 395 1549 394Q1551 389 1556 390Q1561 389 1562 394Q1567 395 1565 401Q1565 404 1560 404H1549Q1545 404 1545 401Z" fill="#f4f4f4"/><path d="M1551 394L1558 401M1558 394L1551 401" stroke="#111" stroke-width="2.200"/><circle cx="1589" cy="397" r="8" stroke="#ddd" fill="none" stroke-width="1.200"/><path d="M1581 397H1597M1589 389V405M1583.500 391.500L1594.500 402.500M1594.500 391.500L1583.500 402.500" stroke="#ddd" stroke-width="1.100"/><path d="M1616 390Q1623 396 1632 390Q1627 397 1632 405Q1624 399 1616 405Q1621 397 1616 390Z" fill="#bbb" stroke="#eee" stroke-width="1"/><circle cx="1659.0" cy="391.0" r="1.700" fill="#ddd"/><circle cx="1664.5" cy="394.0" r="1.700" fill="#ddd"/><circle cx="1664.5" cy="400.5" r="1.700" fill="#ddd"/><circle cx="1659.0" cy="403.5" r="1.700" fill="#ddd"/><circle cx="1653.5" cy="400.5" r="1.700" fill="#ddd"/><circle cx="1653.5" cy="394.0" r="1.700" fill="#ddd"/><circle cx="1659.0" cy="397.0" r="1.700" fill="#ddd"/><path d="M1688 390L1701 387.500V404L1686 407Z" fill="#cfcfcf" stroke="#999"/><path d="M1692 389V406M1696.500 388.500V405M1687.500 396L1701 394M1687 401L1701 399.500" stroke="#888" stroke-width="1" fill="none"/><circle cx="1739" cy="396.500" r="7.500" fill="#f4f4f4"/><path d="M1733 400L1746 393" stroke="#222" stroke-width="2.200"/><g font-family="Liberation Serif, serif" font-weight="bold" fill="#f4f4f4" text-anchor="middle"><text x="1774" y="406" font-size="25">7</text><text x="1809" y="404" font-size="17" letter-spacing="-1.500">0.1</text><text x="1844" y="405.500" font-size="24">A</text></g><path d="M1239.500 384V411M1460.500 384V411M1945.500 384V411M2097.500 384V411M2256.500 384V411M2339.500 384V411" stroke="#c4c4c4"/><defs><linearGradient id="gq" x1="0" y1="0" x2="0" y2="1"><stop offset="0" stop-color="#e0e0e0"/><stop offset=".5" stop-color="#9a9a9a"/><stop offset="1" stop-color="#5a5a5a"/></linearGradient><linearGradient id="gt" x1="0" y1="0" x2="0" y2="1"><stop offset="0" stop-color="#fafafa"/><stop offset=".55" stop-color="#9a9a9a"/><stop offset="1" stop-color="#1a1a1a"/></linearGradient><linearGradient id="pk" x1="0" y1="0" x2="0" y2="1"><stop offset="0" stop-color="#f7a3cf"/><stop offset=".5" stop-color="#ee2f93"/><stop offset="1" stop-color="#c4006a"/></linearGradient></defs><rect x="1872.5" y="383" width="29" height="28" rx="3" fill="url(#gq)" stroke="#333" stroke-width="1.200"/><path d="M1887 387V398M1882 394L1887 400L1892 394Z" stroke="#111" stroke-width="3" fill="#111"/><path d="M1876 404.500H1898" stroke="#111" stroke-width="2.500"/><path d="M1878 408H1896" stroke="#111" stroke-width="1.500" stroke-dasharray="1.500 2"/><rect x="1907.5" y="383" width="29" height="28" rx="3" fill="#f7c530" stroke="#b88a10" stroke-width="1.200"/><path d="M1913 404Q1914 398 1917 403Q1918 392 1921.500 401Q1923 389 1926 399Q1928 387 1931 397" stroke="#c07a00" stroke-width="2.600" fill="none" stroke-linecap="round"/><rect x="1954.5" y="383" width="29" height="28" rx="3" fill="url(#gq)" stroke="#333" stroke-width="1.200"/><rect x="1963.500" y="386.500" width="11" height="21" fill="#222" stroke="#555"/><rect x="1965" y="388" width="8" height="8" fill="#ddd"/><circle cx="2004" cy="397" r="14.500" fill="url(#gq)" stroke="#444" stroke-width="1.200"/><circle cx="2004" cy="397" r="10" fill="#2a2a2a"/><rect x="2024.5" y="383" width="29" height="28" rx="3" fill="url(#gq)" stroke="#333" stroke-width="1.200"/><path d="M2035 390H2044L2037 397H2044L2035 407" stroke="#1a1a1a" stroke-width="3" fill="none"/><rect x="2059.5" y="383" width="29" height="28" rx="3" fill="url(#gq)" stroke="#333" stroke-width="1.200"/><path d="M2063 389.500H2085M2063 397H2085M2063 404.500H2085" stroke="#e6e6e6" stroke-width="4.500"/><path d="M2063 389.500H2085M2063 397H2085M2063 404.500H2085" stroke="#333" stroke-width="1" transform="translate(0 3)"/><rect x="2106.5" y="383" width="29" height="28" rx="3" fill="url(#pk)" stroke="#7a0040" stroke-width="1.200"/><path d="M2107 401H2135" stroke="#3a0020" stroke-width="2"/><circle cx="2108.500" cy="401" r="2" fill="#fff" stroke="#3a0020"/><circle cx="2127" cy="401" r="2" fill="#fff" stroke="#3a0020"/><rect x="2141.500" y="383" width="29" height="28" rx="3" fill="#58d820" stroke="#145a18" stroke-width="1.200"/><rect x="2142.0" y="383.5" width="7" height="6.800" fill="#b4f03c"/><rect x="2149.0" y="383.5" width="7" height="6.800" fill="#7fe024"/><rect x="2156.0" y="383.5" width="7" height="6.800" fill="#c8f850"/><rect x="2163.0" y="383.5" width="7" height="6.800" fill="#8ae62c"/><rect x="2142.0" y="390.3" width="7" height="6.800" fill="#4cc818"/><rect x="2149.0" y="390.3" width="7" height="6.800" fill="#9aec34"/><rect x="2156.0" y="390.3" width="7" height="6.800" fill="#3cb414"/><rect x="2163.0" y="390.3" width="7" height="6.800" fill="#6cd828"/><rect x="2142.0" y="397.1" width="7" height="6.800" fill="#1c7a0c"/><rect x="2149.0" y="397.1" width="7" height="6.800" fill="#38b01c"/><rect x="2156.0" y="397.1" width="7" height="6.800" fill="#0c5a08"/><rect x="2163.0" y="397.1" width="7" height="6.800" fill="#2ca838"/><rect x="2142.0" y="403.9" width="7" height="6.800" fill="#0a4a08"/><rect x="2149.0" y="403.9" width="7" height="6.800" fill="#0c6a0c"/><rect x="2156.0" y="403.9" width="7" height="6.800" fill="#1c8a3c"/><rect x="2163.0" y="403.9" width="7" height="6.800" fill="#5ae8a0"/><path d="M2199 386Q2196 394 2193 399M2199 386Q2203 394 2206 402" stroke="#3a2a10" stroke-width="1.300" fill="none"/><path d="M2199 386Q2204 380 2210 383Q2206 389 2199 386Z" fill="#3aa52a"/><circle cx="2192" cy="403" r="5.500" fill="#d0121c"/><circle cx="2206" cy="405.500" r="5.500" fill="#d0121c"/><circle cx="2190.500" cy="401.500" r="1.500" fill="#ff9a9a"/><circle cx="2204.500" cy="404" r="1.500" fill="#ff9a9a"/><rect x="2220.5" y="383" width="29" height="28" rx="3" fill="url(#gt)" stroke="#333" stroke-width="1.200"/><path d="M2235 410V398M2235 400L2228 392M2235 400L2242 392M2235 398L2231 388M2235 398L2239 388M2228 392L2225 389M2242 392L2245 389M2231 390L2229 386M2239 390L2241 386" stroke="#080808" stroke-width="2.200" fill="none"/><path d="M2226 387L2230 391M2244 387L2240 391M2235 397L2235 386M2232 393L2227 396M2238 393L2243 396" stroke="#080808" stroke-width="1.500"/><path d="M2227 410H2243" stroke="#080808" stroke-width="2.400"/><path d="M2267 392.500H2280V386.500L2294 397L2280 407.500V401.500H2267Z" fill="#3c3c3c" stroke="#1a1a1a" stroke-width="1.200"/><path d="M2303 392.500H2316V386.500L2330 397L2316 407.500V401.500H2303Z" fill="#eaeaea" stroke="#8a8a8a" stroke-width="1.200"/><circle cx="2361" cy="394" r="9" fill="#c9c9c9" stroke="#8a8a8a"/><circle cx="2359" cy="392" r="3.500" fill="#f6f6f6"/><ellipse cx="2368" cy="400" rx="8" ry="10" transform="rotate(35 2368 400)" fill="#e7257f" stroke="#9a0a50"/><ellipse cx="2368" cy="401" rx="3.500" ry="4.500" transform="rotate(35 2368 401)" fill="#ffd0e6"/><path d="M2395.500 384H2400.500V393L2408 408Q2408 410 2405 410H2391Q2388 410 2388 408L2395.500 393Z" fill="#f6d6e6" stroke="#a02060" stroke-width="1.100"/><path d="M2392 400H2404L2408 408Q2408 410 2405 410H2391Q2388 410 2388 408Z" fill="#e7257f"/></svg>
<div class="b" style="left:1157.00px;top:447.00px;width:1383.00px;height:2.00px;background:#8e8e8e;"></div>
<div class="b" style="left:1157.00px;top:449.00px;width:1383.00px;height:36.00px;background:linear-gradient(#f4f4f4,#fdfdfd 40%,#ececec);"></div>
<svg class="b" style="left:1158px;top:449px" width="1382" height="36" viewBox="1158 449 1382 36"><defs><linearGradient id="gf" x1="0" y1="0" x2="0" y2="1"><stop offset="0" stop-color="#8fd36a"/><stop offset="1" stop-color="#4f9a32"/></linearGradient><linearGradient id="bf" x1="0" y1="0" x2="0" y2="1"><stop offset="0" stop-color="#3f8ef0"/><stop offset="1" stop-color="#1450c8"/></linearGradient><radialGradient id="eye" cx=".5" cy=".5" r=".5"><stop offset="0" stop-color="#111"/><stop offset=".3" stop-color="#111"/><stop offset=".36" stop-color="#7fd0ff"/><stop offset="1" stop-color="#1a80d0"/></radialGradient></defs><path d="M1165.500 453.500H1174L1177 456.500H1185.500V467H1165.500Z" fill="#ececec" stroke="#b0b0b0"/><path d="M1163.500 466.500L1168 462.500H1186.500V478.500H1163.500Z" fill="url(#gf)" stroke="#3f7f28"/><path d="M1198.500 453.500H1225.500V478.500H1201.500L1198.500 475.500Z" fill="url(#bf)" stroke="#0c3c9c"/><rect x="1203" y="454" width="17" height="9" fill="#dcdcdc"/><rect x="1204.500" y="468" width="14" height="10.500" fill="#9aa4b4"/><rect x="1206.500" y="470" width="4" height="6.500" fill="#1c50c0"/><path d="M1234.500 452V482" stroke="#c9c9c9"/><rect x="1239.500" y="452.500" width="179" height="27" fill="#fff" stroke="#7a7a7a"/><path d="M1403 463L1408.500 468.500L1414 463" stroke="#444" stroke-width="1.300" fill="none"/><path d="M1427 461V454.500H1434M1444 454.500H1450.500V461M1450.500 471V477.500H1444M1434 477.500H1427V471" stroke="#111" stroke-width="4" fill="none"/><path d="M1436 463L1441.500 469M1441.500 463L1436 469" stroke="#111" stroke-width="1.800"/><path d="M1461.500 465H1467.500L1464.500 468.500Z" fill="#111"/><path d="M1476 466Q1490 453 1504 466Q1490 479 1476 466Z" fill="#fff" stroke="#1a2a3a" stroke-width="2"/><circle cx="1490" cy="466" r="6.800" fill="url(#eye)"/><path d="M1512 465H1518L1515 468.500Z" fill="#111"/><path d="M1527 469Q1530 479 1535 476Q1538 470 1546 462" stroke="#3a1010" stroke-width="2" fill="none"/><path d="M1536 473L1548 455Q1551 453 1552 457L1541 477Z" fill="#e8301c" stroke="#8a1408"/><path d="M1536 473L1541 477L1534.500 479.500Z" fill="#f3d7a0"/><ellipse cx="2317" cy="460" rx="9" ry="7" fill="#ececec" stroke="#9a9a9a"/><path d="M2306 470Q2317 460 2328 470Q2317 481 2306 470Z" fill="#2c2c2c" stroke="#8a8a8a" stroke-width="1.500"/><g transform="rotate(-35 2352 466)"><rect x="2339" y="458" width="26" height="16" rx="7" fill="#f4f4f4" stroke="#6a6a6a" stroke-width="1.300"/><ellipse cx="2359" cy="466" rx="5" ry="7" fill="none" stroke="#6a6a6a" stroke-width="1.200"/><ellipse cx="2346" cy="466" rx="4" ry="7" fill="none" stroke="#8a8a8a" stroke-width="1"/></g><rect x="2370.500" y="449.500" width="33" height="33" fill="#f4f9ff" stroke="#2a6fc4" stroke-width="1.200"/><g transform="rotate(-35 2387 466)"><rect x="2374" y="457" width="26" height="18" rx="8" fill="#c3120e" stroke="#7a0a08"/><ellipse cx="2394" cy="466" rx="5.500" ry="8" fill="#e4302a" stroke="#8a0a08"/><ellipse cx="2394" cy="466" rx="2.800" ry="4.500" fill="#7a0806"/></g><path d="M2412.500 452V482M2491.500 452V482" stroke="#c9c9c9"/><g transform="rotate(-35 2437 466)"><rect x="2424" y="457" width="26" height="18" rx="8" fill="#dcdcdc" stroke="#8a8a8a"/><rect x="2436" y="457" width="14" height="18" rx="7" fill="#3aa01c" stroke="#1c5a0c"/><ellipse cx="2445" cy="466" rx="4" ry="7" fill="#6fd24a" stroke="#1c5a0c"/></g><path d="M2426 456L2449 479" stroke="#1c5a0c" stroke-width="1.600"/><circle cx="2470.500" cy="466" r="12" fill="#f1f1f1" stroke="#9a9a9a"/><path d="M2470.500 454A12 12 0 0 0 2470.500 478Z" fill="#f07a10"/><path d="M2470.500 454V478" stroke="#8a4a08"/><path d="M2510 454L2520 458.500L2523 469L2516 478H2504L2497 469L2500 458.500Z" fill="#4f97e8" stroke="#1c4f9a" stroke-width="1.300"/><circle cx="2506" cy="462" r="3" fill="#b8dcff"/><path d="M2528.500 465H2534.500L2531.500 468.500Z" fill="#111"/></svg>
<span class="t" style="left:1243.50px;top:456.30px;font-size:15.00px;line-height:18.00px;color:#111;letter-spacing:-0.967px;">125%</span>
<div class="b" style="left:1158.00px;top:485.00px;width:1382.00px;height:675.00px;background:#d4d0c8;"></div>
<div class="b" style="left:1158.00px;top:485.00px;width:1382.00px;height:10.00px;background:repeating-linear-gradient(135deg,#a8a69f 0 1.500px,#97958f 1.500px 3px);"></div>
<div class="b" style="left:1158.00px;top:485.00px;width:11.00px;height:675.00px;background:repeating-linear-gradient(135deg,#a8a69f 0 1.500px,#97958f 1.500px 3px);"></div>
<div class="b" style="left:1169.00px;top:494.50px;width:1371.00px;height:1.20px;background:#1a1a1a;"></div>
<div class="b" style="left:1168.50px;top:495.00px;width:1.20px;height:665.00px;background:#1a1a1a;"></div>
<svg class="b" style="left:1158px;top:485px" width="1382" height="675" viewBox="1158 485 1382 675"><defs><linearGradient id="bm" x1="0" y1="0" x2="1" y2="0"><stop offset="0" stop-color="#d9d5cd"/><stop offset="1" stop-color="#e8e5e0"/></linearGradient></defs><path d="M1332 681L1524 565V1243H1515L1335.500 757Z" fill="url(#bm)"/><path d="M1356.5 485V1160M1543.5 485V1160M1731.5 485V1160M1918.5 485V1160M2106.5 485V1160M2293.5 485V1160M2481.5 485V1160M2668.5 485V1160M1158 557.5H2540M1158 620.0H2540M1158 682.5H2540M1158 745.0H2540M1158 807.5H2540M1158 870.0H2540M1158 932.5H2540M1158 995.0H2540M1158 1057.5H2540M1158 1120.0H2540M1158 1182.5H2540" stroke="#bfbbb3" stroke-width="1" fill="none"/><defs><linearGradient id="bl1" gradientUnits="userSpaceOnUse" x1="1333" y1="0" x2="1519" y2="0"><stop offset="0" stop-color="#3a3a38" stop-opacity=".08"/><stop offset="1" stop-color="#2a2a28"/></linearGradient><linearGradient id="bl3" gradientUnits="userSpaceOnUse" x1="0" y1="758" x2="0" y2="1160"><stop offset="0" stop-color="#3a3a38" stop-opacity=".08"/><stop offset="1" stop-color="#2a2a28"/></linearGradient></defs><path d="M1333 680.500L1519 568.500" stroke="url(#bl1)" stroke-width="1.100" fill="none"/><path d="M1335.500 757L1484.500 1160" stroke="url(#bl3)" stroke-width="1.100" fill="none"/><path d="M1422 690L1524 667M1422 748L1524 808" stroke="#dcd9d3" stroke-width="1.500" stroke-dasharray="7 5" fill="none"/><defs><linearGradient id="cb" x1="0" y1="0" x2="0" y2="1"><stop offset="0" stop-color="#f4f4f4"/><stop offset=".5" stop-color="#d6d6d6"/><stop offset="1" stop-color="#cfcfcf"/></linearGradient><linearGradient id="ck" x1="0" y1="0" x2="0" y2="1"><stop offset="0" stop-color="#8a8a8a"/><stop offset=".25" stop-color="#3c3c3c"/><stop offset="1" stop-color="#383838"/></linearGradient></defs><circle cx="1330.0" cy="701.5" r="4.300" fill="#fff" stroke="#222" stroke-width="1.800"/><circle cx="1330.0" cy="736.5" r="4.300" fill="#fff" stroke="#222" stroke-width="1.800"/><circle cx="1421.0" cy="701.5" r="4.300" fill="#fff" stroke="#222" stroke-width="1.800"/><circle cx="1421.0" cy="736.5" r="4.300" fill="#fff" stroke="#222" stroke-width="1.800"/><rect x="1331" y="682" width="89.500" height="74.500" rx="3.500" fill="url(#cb)" stroke="#3a3a3a" stroke-width="1.200"/><rect x="1351.500" y="684.500" width="31" height="70" rx="4" fill="url(#ck)" stroke="#1a1a1a" stroke-width="1.300"/><text transform="translate(1373 747) rotate(-90)" font-family="Liberation Sans, sans-serif" font-weight="bold" font-size="17" fill="#fff" textLength="57">Python</text><g font-family="Liberation Sans, sans-serif" font-size="12.500" fill="#333"><text x="1338.500" y="705.500">x</text><text x="1338.500" y="739.500">y</text><text x="1387.500" y="705.500">out</text><text x="1388" y="740">a</text></g><defs><radialGradient id="cw" cx=".5" cy=".5" r=".5"><stop offset="0" stop-color="#f2f2f2"/><stop offset=".8" stop-color="#cfcfcf"/><stop offset="1" stop-color="#b8b8b8"/></radialGradient></defs><circle cx="2501.500" cy="1123.500" r="24" fill="url(#cw)" stroke="#fff" stroke-width="2.500"/><circle cx="2501.500" cy="1123.500" r="25.500" fill="none" stroke="#555" stroke-width="1"/><path d="M2483 1110L2487 1117L2479 1116Z M2520 1110L2516 1117L2524 1116Z M2483 1137L2487 1130L2479 1131Z M2520 1137L2516 1130L2524 1131Z" fill="#fff"/><path d="M2466 1107L2472 1104.500L2476 1110L2470 1113Z M2472 1112L2478 1115L2476 1120Z" fill="#111"/></svg>
<div class="b" style="left:1159.00px;top:1125.00px;width:184.00px;height:35.00px;background:linear-gradient(90deg,#9a9a9a,#dedede 12%,#f0f0f0 50%,#dcdcdc 88%,#8a8a8a);border:1.500px solid #1a1a1a;box-sizing:border-box;"></div>
<svg class="b" style="left:1159px;top:1125px" width="184" height="35" viewBox="1159 1125 184 35"><path d="M1170 1131H1178Q1181 1131 1181 1134V1141H1173Q1170 1141 1170 1144V1147H1166Q1164 1147 1164 1144V1139Q1164 1136 1167 1136H1170Z" fill="#3c78c8" stroke="#1c4a8a" stroke-width=".8"/><path d="M1183 1153H1175Q1172 1153 1172 1150V1143H1180Q1183 1143 1183 1140V1137H1187Q1189 1137 1189 1140V1145Q1189 1148 1186 1148H1183Z" fill="#f7a51c" stroke="#a8640a" stroke-width=".8"/><rect x="1199.500" y="1130.500" width="23" height="23" rx="2" fill="#f7c530" stroke="#b88a10"/><path d="M1203 1148Q1204 1143 1206.500 1147Q1207.500 1138 1210.500 1145Q1212 1135 1214.500 1143Q1216 1134 1219 1141" stroke="#c07a00" stroke-width="2.200" fill="none" stroke-linecap="round"/><defs><linearGradient id="gq2" x1="0" y1="0" x2="0" y2="1"><stop offset="0" stop-color="#e0e0e0"/><stop offset=".5" stop-color="#9a9a9a"/><stop offset="1" stop-color="#5a5a5a"/></linearGradient></defs><rect x="1234.500" y="1130.500" width="23" height="23" rx="2" fill="url(#gq2)" stroke="#333"/><path d="M1246 1133V1142M1242 1139L1246 1144L1250 1139Z" stroke="#111" stroke-width="2.500" fill="#111"/><path d="M1237 1148H1255" stroke="#111" stroke-width="2"/><rect x="1269.500" y="1130.500" width="23" height="23" rx="2" fill="#f0f0f0" stroke="#555"/><rect x="1273" y="1134" width="16" height="16" fill="#333" stroke="#111"/><path d="M1304 1142L1310 1131.500H1323L1329 1142L1323 1152.500H1310Z" fill="#222" stroke="#111"/><circle cx="1316.500" cy="1142" r="6" stroke="#ddd" fill="none"/><path d="M1310.500 1142H1322.500M1316.500 1136V1148" stroke="#ddd"/></svg>
<div class="b" style="left:1158.00px;top:1160.00px;width:1382.00px;height:26.00px;background:#f3f3f3;border-top:1px solid #dedede;box-sizing:border-box;"></div>
<svg class="b" style="left:1160px;top:1163px" width="24" height="24" viewBox="0 0 24 24"><defs><radialGradient id="inf" cx=".4" cy=".3" r=".8"><stop offset="0" stop-color="#6fb0ff"/><stop offset="1" stop-color="#0a3ca0"/></radialGradient></defs><circle cx="11.500" cy="12" r="10.500" fill="url(#inf)" stroke="#0a2c7a"/><rect x="9.500" y="4.500" width="4" height="10" rx="1.500" fill="#e8f2ff"/><circle cx="11.500" cy="18" r="2.200" fill="#e8f2ff"/></svg>
<span class="t" style="left:1186.50px;top:1166.30px;font-size:15.00px;line-height:18.00px;color:#1a1a1a;letter-spacing:-0.056px;">Solution completed in ~4.9 seconds (80 seconds ago)</span>
<span class="t" style="left:2444.70px;top:1166.80px;font-size:15.00px;line-height:18.00px;color:#555;letter-spacing:-0.712px;">1.0.0007</span>
<svg class="b" style="left:2524px;top:1171px" width="14" height="14"><g fill="#9a9a9a"><rect x="9" y="1" width="2" height="2"/><rect x="5" y="5" width="2" height="2"/><rect x="9" y="5" width="2" height="2"/><rect x="1" y="9" width="2" height="2"/><rect x="5" y="9" width="2" height="2"/><rect x="9" y="9" width="2" height="2"/></g></svg>
<div class="b" style="left:1524.00px;top:564.00px;width:875.00px;height:679.00px;background:#ffffff;border:1px solid #8c8c8c;border-top-color:#c8c8c8;box-sizing:border-box;box-shadow:0 3px 14px rgba(0,0,0,.45);"></div>
<span class="t" style="left:1533.00px;top:575.10px;font-size:15.00px;line-height:18.00px;color:#a2a2a2;letter-spacing:-0.171px;">Grasshopper Python Script Editor</span>
<div class="b" style="left:2373.00px;top:573.50px;width:24.50px;height:24.50px;background:#e6e6e6;"></div>
<svg class="b" style="left:2379px;top:580px" width="12" height="12"><path d="M2 2L10 10M10 2L2 10" stroke="#f4f4f4" stroke-width="1.200"/></svg>
<div class="b" style="left:1525.00px;top:602.00px;width:873.00px;height:28.00px;background:linear-gradient(90deg,#f3f3f3,#f7f7f7 50%,#fcfcfc);"></div>
<span class="t" style="left:1542.00px;top:607.33px;font-size:15.50px;line-height:18.60px;color:#111;letter-spacing:-0.495px;">File</span>
<span class="t" style="left:1586.40px;top:607.33px;font-size:15.50px;line-height:18.60px;color:#111;letter-spacing:-0.278px;">Edit</span>
<span class="t" style="left:1633.20px;top:607.33px;font-size:15.50px;line-height:18.60px;color:#111;letter-spacing:-0.218px;">Tools</span>
<span class="t" style="left:1689.20px;top:607.33px;font-size:15.50px;line-height:18.60px;color:#111;letter-spacing:0.007px;">Mode</span>
<span class="t" style="left:1749.40px;top:607.33px;font-size:15.50px;line-height:18.60px;color:#111;letter-spacing:-0.121px;">Help</span>
<div class="b" style="left:2265.00px;top:604.00px;width:66.00px;height:24.00px;background:#f0f0f0;"></div>
<div class="b" style="left:2334.00px;top:604.00px;width:63.00px;height:24.00px;background:#f0f0f0;"></div>
<svg class="b" style="left:2265px;top:604px" width="132" height="24" viewBox="2265 604 132 24"><defs><linearGradient id="tg" x1="0" y1="0" x2="0" y2="1"><stop offset="0" stop-color="#8a9a8a"/><stop offset="1" stop-color="#0f1f0c"/></linearGradient></defs><path d="M2272 608.500L2288 616L2272 624Z" fill="url(#tg)"/><rect x="2341" y="608.500" width="16" height="15.500" fill="url(#tg)"/><path d="M2343.500 616.500L2347.500 621L2355 611.500" stroke="#f2f2f2" stroke-width="2" fill="none"/></svg>
<span class="t" style="left:2294.00px;top:607.33px;font-size:15.50px;line-height:18.60px;color:#111;letter-spacing:-0.806px;">Test</span>
<span class="t" style="left:2363.00px;top:607.33px;font-size:15.50px;line-height:18.60px;color:#111;letter-spacing:-1.047px;">OK</span>
<div class="b" style="left:1525.00px;top:630.00px;width:873.00px;height:1.20px;background:#4a4a4a;"></div>
<div class="b" style="left:1525.00px;top:631.00px;width:23.00px;height:421.00px;background:#eef0f3;"></div>
<div class="b" style="left:1547.00px;top:631.00px;width:1.00px;height:421.00px;background:#9a9a9a;"></div>
<div class="b" style="left:1593.00px;top:631.00px;width:1.00px;height:421.00px;border-left:1px dotted #9a9a9a;"></div>
<span class="t m" style="left:1548.500px;top:636.11px;font-size:24.92px;line-height:29.90px;color:#9b9b9b">1</span>
<span class="t m" style="left:1627.500px;top:636.11px;font-size:24.92px;line-height:29.90px;white-space:pre"><span style="color:#0000d0;font-weight:bold;">import</span><span style="color:#000;"> compas</span></span>
<span class="t m" style="left:1548.500px;top:670.11px;font-size:24.92px;line-height:29.90px;color:#9b9b9b">2</span>
<span class="t m" style="left:1548.500px;top:704.11px;font-size:24.92px;line-height:29.90px;color:#9b9b9b">3</span>
<span class="t m" style="left:1627.500px;top:704.11px;font-size:24.92px;line-height:29.90px;white-space:pre"><span style="color:#0000d0;font-weight:bold;">from</span><span style="color:#000;"> compas.datastructures </span><span style="color:#0000d0;font-weight:bold;">import</span><span style="color:#000;"> Mesh</span></span>
<span class="t m" style="left:1548.500px;top:738.11px;font-size:24.92px;line-height:29.90px;color:#9b9b9b">4</span>
<span class="t m" style="left:1627.500px;top:738.11px;font-size:24.92px;line-height:29.90px;white-space:pre"><span style="color:#0000d0;font-weight:bold;">from</span><span style="color:#000;"> compas_ghpython.artists </span><span style="color:#0000d0;font-weight:bold;">import</span><span style="color:#000;"> MeshArtist</span></span>
<span class="t m" style="left:1548.500px;top:772.11px;font-size:24.92px;line-height:29.90px;color:#9b9b9b">5</span>
<span class="t m" style="left:1548.500px;top:806.11px;font-size:24.92px;line-height:29.90px;color:#9b9b9b">6</span>
<span class="t m" style="left:1627.500px;top:806.11px;font-size:24.92px;line-height:29.90px;white-space:pre"><span style="color:#000;">mesh = Mesh.</span><span style="color:#191970;font-weight:bold;">from_obj</span><span style="color:#000;">(compas.</span><span style="color:#191970;font-weight:bold;">get</span><span style="color:#000;">(</span><span style="color:#d01010;">'faces.obj'</span><span style="color:#000;">))</span></span>
<span class="t m" style="left:1548.500px;top:840.11px;font-size:24.92px;line-height:29.90px;color:#9b9b9b">7</span>
<span class="t m" style="left:1548.500px;top:874.11px;font-size:24.92px;line-height:29.90px;color:#9b9b9b">8</span>
<span class="t m" style="left:1627.500px;top:874.11px;font-size:24.92px;line-height:29.90px;white-space:pre"><span style="color:#000;">artist = </span><span style="color:#191970;font-weight:bold;">MeshArtist</span><span style="color:#000;">(mesh)</span></span>
<span class="t m" style="left:1548.500px;top:908.11px;font-size:24.92px;line-height:29.90px;color:#9b9b9b">9</span>
<span class="t m" style="left:1548.500px;top:942.11px;font-size:24.92px;line-height:29.90px;color:#9b9b9b">10</span>
<span class="t m" style="left:1627.500px;top:942.11px;font-size:24.92px;line-height:29.90px;white-space:pre"><span style="color:#000;">a = artist.</span><span style="color:#191970;font-weight:bold;">draw</span><span style="color:#000;">()</span></span>
<span class="t m" style="left:1548.500px;top:976.11px;font-size:24.92px;line-height:29.90px;color:#9b9b9b">11</span>
<div class="b" style="left:2378.00px;top:631.00px;width:20.00px;height:421.00px;background:#f0f0f0;"></div>
<div class="b" style="left:2378.00px;top:652.00px;width:19.00px;height:244.50px;background:#cdcdcd;"></div>
<svg class="b" style="left:2378px;top:631px" width="20" height="421" fill="none" stroke="#505050" stroke-width="1.800"><path d="M5 13L9.500 8.500L14 13"/><path d="M5 406L9.500 410.500L14 406"/></svg>
<div class="b" style="left:1525.00px;top:1052.00px;width:873.00px;height:20.00px;background:#f0f0f0;"></div>
<div class="b" style="left:1546.00px;top:1052.00px;width:580.00px;height:19.50px;background:#cdcdcd;"></div>
<svg class="b" style="left:1525px;top:1052px" width="873" height="20" fill="none" stroke="#505050" stroke-width="1.800"><path d="M11.500 5L7 9.500L11.500 14"/><path d="M838.500 5L843 9.500L838.500 14"/></svg>
<div class="b" style="left:1525.00px;top:1072.00px;width:873.00px;height:1.20px;background:#5a5a5a;"></div>
<div class="b" style="left:1525.00px;top:1073.20px;width:873.00px;height:5.00px;background:#f0f0f0;"></div>
<div class="b" style="left:1525.00px;top:1078.00px;width:873.00px;height:1.20px;background:#5a5a5a;"></div>
<div class="b" style="left:1525.00px;top:1079.20px;width:873.00px;height:24.00px;background:#f0f0f0;"></div>
<div class="b" style="left:1525.00px;top:1102.50px;width:873.00px;height:1.00px;background:#dcdcdc;"></div>
<div class="b" style="left:1525.00px;top:1079.20px;width:53.00px;height:24.50px;background:#ffffff;"></div>
<div class="b" style="left:1578.00px;top:1081.00px;width:45.00px;height:22.00px;background:#f0f0f0;border:1px solid #d9d9d9;box-sizing:border-box;"></div>
<span class="t" style="left:1533.50px;top:1081.75px;font-size:14.00px;line-height:16.80px;color:#111;letter-spacing:-0.671px;">Output</span>
<span class="t" style="left:1583.00px;top:1081.83px;font-size:15.50px;line-height:18.60px;color:#111;letter-spacing:-0.821px;">Help</span>
<div class="b" style="left:1532.00px;top:1108.00px;width:860.00px;height:127.00px;background:#ababab;border:1px solid #868686;border-right-color:#e8e8e8;border-bottom-color:#e8e8e8;box-sizing:border-box;"></div>
<div class="b" style="left:1533.00px;top:1109.00px;width:858.00px;height:15.00px;background:#ffffff;"></div>
<div class="b" style="left:1556.00px;top:1109.00px;width:1.00px;height:15.00px;background:#e4e4e4;"></div>
</body></html>
